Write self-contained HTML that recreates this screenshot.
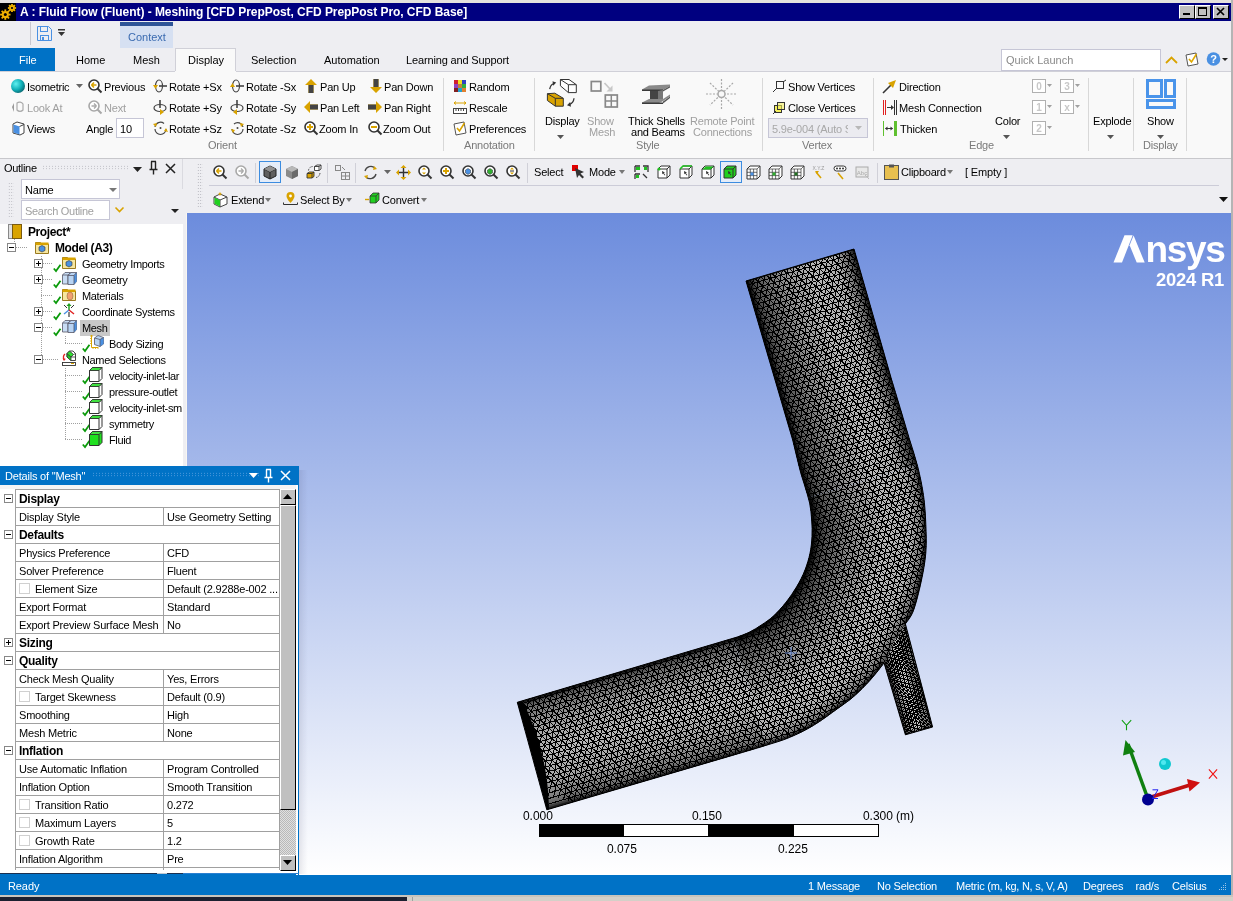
<!DOCTYPE html>
<html><head><meta charset="utf-8"><style>
html,body{margin:0;padding:0;}
body{width:1233px;height:901px;position:relative;overflow:hidden;background:#EEEEF2;font-family:"Liberation Sans",sans-serif;color:#000;}
.t{position:absolute;white-space:nowrap;}
.r{position:absolute;}
svg.r{overflow:visible;}
</style></head><body><div style="position:absolute;left:0;top:0;width:1233px;height:901px;overflow:hidden;will-change:transform;">
<div class="r" style="left:0px;top:0px;width:1233px;height:3px;background:#E4E2DE;"></div>
<div class="r" style="left:0px;top:3px;width:1231px;height:18px;background:#000080;"></div>
<div class="r" style="left:1231px;top:0px;width:2px;height:901px;background:#B4B4B4;"></div>
<svg class="r" style="left:0px;top:3px;" width="16" height="18" viewBox="0 0 16 18"><rect width="16" height="18" fill="#000"/><circle cx="5.3" cy="11.6" r="3.6" fill="#F0B000"/><path d="M8.40,11.60L10.50,11.60" stroke="#F0B000" stroke-width="1.8"/><path d="M7.49,13.79L8.98,15.28" stroke="#F0B000" stroke-width="1.8"/><path d="M5.30,14.70L5.30,16.80" stroke="#F0B000" stroke-width="1.8"/><path d="M3.11,13.79L1.62,15.28" stroke="#F0B000" stroke-width="1.8"/><path d="M2.20,11.60L0.10,11.60" stroke="#F0B000" stroke-width="1.8"/><path d="M3.11,9.41L1.62,7.92" stroke="#F0B000" stroke-width="1.8"/><path d="M5.30,8.50L5.30,6.40" stroke="#F0B000" stroke-width="1.8"/><path d="M7.49,9.41L8.98,7.92" stroke="#F0B000" stroke-width="1.8"/><circle cx="5.3" cy="11.6" r="1.5" fill="#000"/><circle cx="12" cy="5" r="2.9" fill="#F0B000"/><path d="M14.40,5.00L16.10,5.00" stroke="#F0B000" stroke-width="1.8"/><path d="M13.70,6.70L14.90,7.90" stroke="#F0B000" stroke-width="1.8"/><path d="M12.00,7.40L12.00,9.10" stroke="#F0B000" stroke-width="1.8"/><path d="M10.30,6.70L9.10,7.90" stroke="#F0B000" stroke-width="1.8"/><path d="M9.60,5.00L7.90,5.00" stroke="#F0B000" stroke-width="1.8"/><path d="M10.30,3.30L9.10,2.10" stroke="#F0B000" stroke-width="1.8"/><path d="M12.00,2.60L12.00,0.90" stroke="#F0B000" stroke-width="1.8"/><path d="M13.70,3.30L14.90,2.10" stroke="#F0B000" stroke-width="1.8"/><circle cx="12" cy="5" r="1.1" fill="#000"/></svg>
<div class="t" style="left:20px;top:4.8px;font-size:12px;line-height:14px;font-weight:700;color:#fff;letter-spacing:-0.05px;">A : Fluid Flow (Fluent) - Meshing [CFD PrepPost, CFD PrepPost Pro, CFD Base]</div>
<div class="r" style="left:1179px;top:5px;width:14px;height:12px;background:#C0C0C0;border-left:1px solid #fff;border-top:1px solid #fff;border-right:1px solid #000;border-bottom:1px solid #000;"></div>
<div class="r" style="left:1195px;top:5px;width:14px;height:12px;background:#C0C0C0;border-left:1px solid #fff;border-top:1px solid #fff;border-right:1px solid #000;border-bottom:1px solid #000;"></div>
<div class="r" style="left:1213px;top:5px;width:14px;height:12px;background:#C0C0C0;border-left:1px solid #fff;border-top:1px solid #fff;border-right:1px solid #000;border-bottom:1px solid #000;"></div>
<svg class="r" style="left:1179px;top:5px;" width="16" height="14" viewBox="0 0 16 14"><rect x="4" y="8" width="7" height="2" fill="#000"/></svg>
<svg class="r" style="left:1195px;top:5px;" width="16" height="14" viewBox="0 0 16 14"><rect x="3.5" y="2.5" width="8" height="8" fill="none" stroke="#000" stroke-width="1"/><rect x="3" y="2" width="9" height="2" fill="#000"/></svg>
<svg class="r" style="left:1213px;top:5px;" width="16" height="14" viewBox="0 0 16 14"><path d="M4 3l7 7M11 3l-7 7" stroke="#000" stroke-width="1.7"/></svg>
<div class="r" style="left:30px;top:22px;width:1px;height:23px;background:#C8C8D0;"></div>
<svg class="r" style="left:37px;top:26px;" width="15" height="15" viewBox="0 0 15 15"><path d="M0.5 0.5h11l3 3v11h-14z" fill="none" stroke="#4A90E2" stroke-width="1"/><rect x="3.5" y="0.5" width="7" height="5" fill="none" stroke="#4A90E2"/><rect x="3.5" y="9.5" width="8" height="5" fill="none" stroke="#4A90E2"/><rect x="5" y="11" width="2" height="3" fill="#4A90E2"/></svg>
<svg class="r" style="left:57px;top:28px;" width="9" height="8" viewBox="0 0 9 8"><rect x="1" y="1" width="7" height="1.5" fill="#333"/><path d="M1 4h7l-3.5 4z" fill="#333"/></svg>
<div class="r" style="left:120px;top:22px;width:53px;height:4px;background:#2F5597;"></div>
<div class="r" style="left:120px;top:26px;width:53px;height:22px;background:#D6E0F2;"></div>
<div class="t" style="left:128px;top:29.7px;font-size:11px;line-height:14px;color:#3A6AB0;">Context</div>
<div class="r" style="left:1001px;top:49px;width:158px;height:20px;background:#fff;border:1px solid #C6C6D6;"></div>
<div class="t" style="left:1006px;top:53.2px;font-size:11px;line-height:14px;color:#8A8A8A;">Quick Launch</div>
<svg class="r" style="left:1165px;top:56px;" width="13" height="8" viewBox="0 0 13 8"><path d="M1 7l5.5-5.5L12 7" fill="none" stroke="#D9A300" stroke-width="1.8"/></svg>
<svg class="r" style="left:1185px;top:52px;" width="15" height="15" viewBox="0 0 15 15"><path d="M1 3l10-2 2 11-10 2z" fill="#fff" stroke="#555" stroke-width="1"/><path d="M4 7l2.5 3 5-8" fill="none" stroke="#E0A800" stroke-width="1.6"/></svg>
<svg class="r" style="left:1206px;top:51px;" width="22" height="16" viewBox="0 0 22 16"><circle cx="7.5" cy="8" r="6.8" fill="#4A90E2"/><text x="7.5" y="12" font-family="Liberation Sans" font-weight="700" font-size="11" fill="#fff" text-anchor="middle">?</text><path d="M16 7h6l-3 3z" fill="#222"/></svg>
<div class="r" style="left:0px;top:48px;width:55px;height:23px;background:#0072C6;"></div>
<div class="t" style="left:19px;top:53.2px;font-size:11px;line-height:14px;color:#fff;">File</div>
<div class="t" style="left:76px;top:53.2px;font-size:11px;line-height:14px;">Home</div>
<div class="t" style="left:133px;top:53.2px;font-size:11px;line-height:14px;">Mesh</div>
<div class="r" style="left:175px;top:48px;width:61px;height:24px;background:#F9F9F9;border:1px solid #D0D0D8;border-bottom:none;box-sizing:border-box;"></div>
<div class="t" style="left:188px;top:53.2px;font-size:11px;line-height:14px;">Display</div>
<div class="t" style="left:251px;top:53.2px;font-size:11px;line-height:14px;">Selection</div>
<div class="t" style="left:324px;top:53.2px;font-size:11px;line-height:14px;">Automation</div>
<div class="t" style="left:406px;top:53.2px;font-size:11px;line-height:14px;letter-spacing:-0.15px;">Learning and Support</div>
<div class="r" style="left:0px;top:71px;width:1231px;height:88px;background:#F9F9F9;"></div>
<div class="r" style="left:0px;top:71px;width:175px;height:1px;background:#D0D0D8;"></div>
<div class="r" style="left:236px;top:71px;width:995px;height:1px;background:#D0D0D8;"></div>
<div class="r" style="left:0px;top:158px;width:1231px;height:1px;background:#C8C8CC;"></div>
<svg class="r" style="left:11px;top:79px;" width="15" height="15" viewBox="0 0 15 15"><defs><radialGradient id="sph" cx="0.35" cy="0.35" r="0.7"><stop offset="0" stop-color="#5FF0F0"/><stop offset="0.6" stop-color="#10B0B8"/><stop offset="1" stop-color="#0A6A74"/></radialGradient></defs><circle cx="7" cy="7" r="7" fill="url(#sph)"/></svg>
<div class="t" style="left:27px;top:80.2px;font-size:11px;line-height:14px;letter-spacing:-0.25px;">Isometric</div>
<svg class="r" style="left:76px;top:84px;" width="7" height="4" viewBox="0 0 7 4"><path d="M0 0h7l-3.5 4z" fill="#666"/></svg>
<svg class="r" style="left:88px;top:79px;" width="15" height="15" viewBox="0 0 15 15"><circle cx="6" cy="6" r="5" fill="#fff" stroke="#333" stroke-width="1.6"/><path d="M9.5 9.5l4 4" stroke="#333" stroke-width="2"/><path d="M3.5 6h5M3.5 6l2.5-2.5M3.5 6l2.5 2.5" stroke="#D9A300" stroke-width="1.6" fill="none"/></svg>
<div class="t" style="left:104px;top:80.2px;font-size:11px;line-height:14px;letter-spacing:-0.2px;">Previous</div>
<svg class="r" style="left:11px;top:100px;" width="15" height="15" viewBox="0 0 15 15"><path d="M1 7l2-4v9z" fill="#999"/><path d="M6 3a4 4 0 0 1 6 1v6a4 4 0 0 1-6 0z" fill="none" stroke="#aaa" stroke-width="1.2"/></svg>
<div class="t" style="left:27px;top:101.2px;font-size:11px;line-height:14px;color:#A0A0A0;letter-spacing:-0.2px;">Look At</div>
<svg class="r" style="left:88px;top:100px;" width="15" height="15" viewBox="0 0 15 15"><circle cx="6" cy="6" r="5" fill="#fff" stroke="#A8A8A8" stroke-width="1.6"/><path d="M9.5 9.5l4 4" stroke="#A8A8A8" stroke-width="2"/><path d="M8.5 6h-5M8.5 6l-2.5-2.5M8.5 6l-2.5 2.5" stroke="#AAA" stroke-width="1.4" fill="none"/></svg>
<div class="t" style="left:104px;top:101.2px;font-size:11px;line-height:14px;color:#A0A0A0;letter-spacing:-0.2px;">Next</div>
<svg class="r" style="left:12px;top:121px;" width="13" height="14" viewBox="0 0 13 14"><path d="M1 3l4-2 7 2v9l-4 2-7-2z" fill="#fff" stroke="#444" stroke-width="1"/><path d="M1.5 3.5l6 2v8l-6-2z" fill="#4A90E2"/><path d="M7.5 5.5l4.5-2" stroke="#444"/></svg>
<div class="t" style="left:27px;top:122.2px;font-size:11px;line-height:14px;letter-spacing:-0.2px;">Views</div>
<div class="t" style="left:86px;top:122.2px;font-size:11px;line-height:14px;letter-spacing:-0.2px;">Angle</div>
<div class="r" style="left:116px;top:118px;width:28px;height:20px;background:#fff;border:1px solid #C6C6D6;box-sizing:border-box;"></div>
<div class="t" style="left:120px;top:122.2px;font-size:11px;line-height:14px;">10</div>
<svg class="r" style="left:153px;top:79px;" width="15" height="15" viewBox="0 0 15 15"><ellipse cx="6" cy="7" rx="3.5" ry="6" fill="none" stroke="#444" stroke-width="1.2"/><path d="M6 7h8" stroke="#444" stroke-width="1.6"/><path d="M0 6h5l-2.5 4z" fill="#D9A300"/></svg>
<div class="t" style="left:169px;top:80.2px;font-size:11px;line-height:14px;letter-spacing:-0.2px;">Rotate +Sx</div>
<svg class="r" style="left:230px;top:79px;" width="15" height="15" viewBox="0 0 15 15"><ellipse cx="6" cy="7" rx="3.5" ry="6" fill="none" stroke="#444" stroke-width="1.2"/><path d="M6 7h8" stroke="#444" stroke-width="1.6"/><path d="M0 8h5l-2.5-4z" fill="#D9A300"/></svg>
<div class="t" style="left:246px;top:80.2px;font-size:11px;line-height:14px;letter-spacing:-0.2px;">Rotate -Sx</div>
<svg class="r" style="left:153px;top:100px;" width="15" height="15" viewBox="0 0 15 15"><ellipse cx="7" cy="8" rx="6" ry="3.5" fill="none" stroke="#444" stroke-width="1.2"/><path d="M7 0v8" stroke="#444" stroke-width="1.6"/><path d="M7 9v6l4-3z" fill="#D9A300"/></svg>
<div class="t" style="left:169px;top:101.2px;font-size:11px;line-height:14px;letter-spacing:-0.2px;">Rotate +Sy</div>
<svg class="r" style="left:230px;top:100px;" width="15" height="15" viewBox="0 0 15 15"><ellipse cx="7" cy="8" rx="6" ry="3.5" fill="none" stroke="#444" stroke-width="1.2"/><path d="M7 0v8" stroke="#444" stroke-width="1.6"/><path d="M7 9v6l-4-3z" fill="#D9A300"/></svg>
<div class="t" style="left:246px;top:101.2px;font-size:11px;line-height:14px;letter-spacing:-0.2px;">Rotate -Sy</div>
<svg class="r" style="left:153px;top:121px;" width="15" height="15" viewBox="0 0 15 15"><path d="M2 8a5.5 5.5 0 0 0 11 0M2 6a5.5 5.5 0 0 1 9-3.5" fill="none" stroke="#444" stroke-width="1.2"/><circle cx="7.5" cy="7" r="1" fill="#444"/><path d="M0 3l3 3 1-4z" fill="#D9A300"/><path d="M13 7l2 4-4-1z" fill="#D9A300"/></svg>
<div class="t" style="left:169px;top:122.2px;font-size:11px;line-height:14px;letter-spacing:-0.2px;">Rotate +Sz</div>
<svg class="r" style="left:230px;top:121px;" width="15" height="15" viewBox="0 0 15 15"><path d="M2 8a5.5 5.5 0 0 0 11 0M4 3a5.5 5.5 0 0 1 9 3" fill="none" stroke="#444" stroke-width="1.2"/><circle cx="7.5" cy="7" r="1" fill="#444"/><path d="M14 3l-3 3-1-4z" fill="#D9A300"/><path d="M1 8l2 4 2-3z" fill="#D9A300"/></svg>
<div class="t" style="left:246px;top:122.2px;font-size:11px;line-height:14px;letter-spacing:-0.2px;">Rotate -Sz</div>
<svg class="r" style="left:305px;top:79px;" width="12" height="14" viewBox="0 0 12 14"><path d="M6 0l6 6H8.5v8h-5V6H0z" fill="#D9A300"/><rect x="3.5" y="6" width="5" height="8" fill="#444"/></svg>
<div class="t" style="left:320px;top:80.2px;font-size:11px;line-height:14px;letter-spacing:-0.2px;">Pan Up</div>
<svg class="r" style="left:370px;top:79px;" width="12" height="14" viewBox="0 0 12 14"><path d="M6 14l6-6H8.5V0h-5v8H0z" fill="#D9A300"/><rect x="3.5" y="0" width="5" height="8" fill="#444"/></svg>
<div class="t" style="left:384px;top:80.2px;font-size:11px;line-height:14px;letter-spacing:-0.2px;">Pan Down</div>
<svg class="r" style="left:304px;top:101px;" width="14" height="12" viewBox="0 0 14 12"><path d="M0 6l6-6v3.5h8v5H6V12z" fill="#D9A300"/><rect x="6" y="3.5" width="8" height="5" fill="#444"/></svg>
<div class="t" style="left:320px;top:101.2px;font-size:11px;line-height:14px;letter-spacing:-0.2px;">Pan Left</div>
<svg class="r" style="left:368px;top:101px;" width="14" height="12" viewBox="0 0 14 12"><path d="M14 6L8 0v3.5H0v5h8V12z" fill="#D9A300"/><rect x="0" y="3.5" width="8" height="5" fill="#444"/></svg>
<div class="t" style="left:384px;top:101.2px;font-size:11px;line-height:14px;letter-spacing:-0.2px;">Pan Right</div>
<svg class="r" style="left:304px;top:121px;" width="15" height="15" viewBox="0 0 15 15"><circle cx="6" cy="6" r="5" fill="#fff" stroke="#333" stroke-width="1.6"/><path d="M9.5 9.5l4 4" stroke="#333" stroke-width="2"/><path d="M3 6h6M6 3v6" stroke="#D9A300" stroke-width="2"/></svg>
<div class="t" style="left:319px;top:122.2px;font-size:11px;line-height:14px;letter-spacing:-0.2px;">Zoom In</div>
<svg class="r" style="left:368px;top:121px;" width="15" height="15" viewBox="0 0 15 15"><circle cx="6" cy="6" r="5" fill="#fff" stroke="#333" stroke-width="1.6"/><path d="M9.5 9.5l4 4" stroke="#333" stroke-width="2"/><path d="M3 6h6" stroke="#D9A300" stroke-width="2"/></svg>
<div class="t" style="left:383px;top:122.2px;font-size:11px;line-height:14px;letter-spacing:-0.2px;">Zoom Out</div>
<div class="t" style="left:208px;top:138.2px;font-size:11px;line-height:14px;color:#7A7A7A;letter-spacing:-0.2px;">Orient</div>
<div class="r" style="left:443px;top:78px;width:1px;height:73px;background:#D8D8D8;"></div>
<svg class="r" style="left:454px;top:80px;" width="12" height="12" viewBox="0 0 12 12"><rect x="0" y="0" width="4" height="4" fill="#D02030"/><rect x="4" y="0" width="4" height="4" fill="#F0E020"/><rect x="8" y="0" width="4" height="4" fill="#3040C0"/><rect x="0" y="4" width="4" height="4" fill="#9040C0"/><rect x="4" y="4" width="4" height="4" fill="#C08040"/><rect x="8" y="4" width="4" height="4" fill="#30B040"/><rect x="0" y="8" width="4" height="4" fill="#802020"/><rect x="4" y="8" width="4" height="4" fill="#20A0D0"/><rect x="8" y="8" width="4" height="4" fill="#E08030"/></svg>
<div class="t" style="left:469px;top:80.2px;font-size:11px;line-height:14px;letter-spacing:-0.2px;">Random</div>
<svg class="r" style="left:453px;top:101px;" width="14" height="13" viewBox="0 0 14 13"><path d="M1 2h12M1 2l2-1.5M1 2l2 1.5M13 2l-2-1.5M13 2l-2 1.5" stroke="#D9A300" stroke-width="1" fill="none"/><rect x="0.5" y="7.5" width="13" height="5" fill="#fff" stroke="#444"/><path d="M3 8v2M5.5 8v2M8 8v2M10.5 8v2" stroke="#444"/></svg>
<div class="t" style="left:469px;top:101.2px;font-size:11px;line-height:14px;letter-spacing:-0.2px;">Rescale</div>
<svg class="r" style="left:453px;top:121px;" width="14" height="14" viewBox="0 0 14 14"><path d="M1 3l10-2 2 11-10 2z" fill="#fff" stroke="#555"/><path d="M4 7l2.5 3 5-8" fill="none" stroke="#D9A300" stroke-width="1.6"/></svg>
<div class="t" style="left:469px;top:122.2px;font-size:11px;line-height:14px;letter-spacing:-0.2px;">Preferences</div>
<div class="t" style="left:464px;top:138.2px;font-size:11px;line-height:14px;color:#7A7A7A;letter-spacing:-0.2px;">Annotation</div>
<div class="r" style="left:534px;top:78px;width:1px;height:73px;background:#D8D8D8;"></div>
<svg class="r" style="left:540px;top:75px;" width="40" height="36" viewBox="0 0 40 36"><path d="M20.4,4.5 L29,4.5 L36.3,9.7 V17.6 H28.4 L20.4,10.8 Z" fill="#fff" stroke="#333" stroke-width="1"/><path d="M20.4,4.5 L28.4,9.7 H36.3 M28.4,9.7 V17.6" fill="none" stroke="#333" stroke-width="1"/><path d="M7.4,18.7 L14.8,18.2 L23.3,23.3 V31.2 H15.3 L7.4,25.5 Z" fill="#D9A300" stroke="#333" stroke-width="1"/><path d="M7.4,18.7 L15.3,23.3 H23.3 M15.3,23.3 V31.2" fill="none" stroke="#333" stroke-width="1"/><path d="M9.7,14.2 Q10.5,9.5 14,8.5" fill="none" stroke="#333" stroke-width="1.3"/><path d="M12.5,6.3 L16.2,7.6 L13.2,10.8 Z" fill="#333"/><path d="M34,23.3 Q33.5,28 29.5,29.5" fill="none" stroke="#333" stroke-width="1.3"/><path d="M31,31.8 L27,30.3 L30.2,27 Z" fill="#333"/></svg>
<div class="t" style="left:545px;top:114.2px;font-size:11px;line-height:14px;letter-spacing:-0.2px;">Display</div>
<svg class="r" style="left:557px;top:135px;" width="7" height="4" viewBox="0 0 7 4"><path d="M0 0h7l-3.5 4z" fill="#555"/></svg>
<svg class="r" style="left:589px;top:79px;" width="31" height="31" viewBox="0 0 31 31"><rect x="2.3" y="2.5" width="9.5" height="9.5" fill="none" stroke="#888" stroke-width="1.7"/><path d="M15.5,4 L22,11" stroke="#C8C8C8" stroke-width="1.8"/><path d="M23.5,12.5 L23.5,6.5 L17.5,12.5 Z" fill="#C8C8C8"/><rect x="16.3" y="16" width="12" height="12" fill="none" stroke="#888" stroke-width="1.7"/><path d="M22.3,16 V28 M16.3,22 H28.3" stroke="#888" stroke-width="1.5"/></svg>
<div class="t" style="left:587px;top:114.2px;font-size:11px;line-height:14px;color:#A0A0A0;letter-spacing:-0.2px;">Show</div>
<div class="t" style="left:589px;top:125.2px;font-size:11px;line-height:14px;color:#A0A0A0;letter-spacing:-0.2px;">Mesh</div>
<svg class="r" style="left:640px;top:82px;" width="32" height="28" viewBox="0 0 32 28"><path d="M2,7.5 L9,3.5 L30,2.5 V4 L23,8 L2,8.5 Z" fill="#8A8A8A"/><path d="M2,7.5 H23 V9 H2 Z" fill="#3A3A3A"/><path d="M23,8 L30,4 V5.5 L23,9.5 Z" fill="#555"/><path d="M10,9 H18 V20 H10 Z" fill="#444"/><path d="M18,9 L23,8 V19 L18,20 Z" fill="#777"/><path d="M2,20.5 L9,17 H23 L30,12.5 V14.5 L23,19 L18,21.5 H2 Z" fill="#8A8A8A"/><path d="M2,20.5 H23 V22 H2 Z" fill="#3A3A3A"/><path d="M23,19.5 L30,14.5 V16 L23,21.5 Z" fill="#555"/></svg>
<div class="t" style="left:628px;top:114.2px;font-size:11px;line-height:14px;letter-spacing:-0.2px;">Thick Shells</div>
<div class="t" style="left:631px;top:125.2px;font-size:11px;line-height:14px;letter-spacing:-0.2px;">and Beams</div>
<svg class="r" style="left:706px;top:79px;" width="31" height="30" viewBox="0 0 31 30"><g stroke="#A8A8A8" stroke-width="1.2" stroke-dasharray="2 1.5"><path d="M15.5 0v30M0 15h31M4 4l23 22M27 4L4 26"/></g><circle cx="15.5" cy="15" r="3.5" fill="#F9F9F9" stroke="#A8A8A8" stroke-width="1.5"/></svg>
<div class="t" style="left:690px;top:114.2px;font-size:11px;line-height:14px;color:#A0A0A0;letter-spacing:-0.2px;">Remote Point</div>
<div class="t" style="left:693px;top:125.2px;font-size:11px;line-height:14px;color:#A0A0A0;letter-spacing:-0.2px;">Connections</div>
<div class="t" style="left:636px;top:138.2px;font-size:11px;line-height:14px;color:#7A7A7A;letter-spacing:-0.2px;">Style</div>
<div class="r" style="left:762px;top:78px;width:1px;height:73px;background:#D8D8D8;"></div>
<svg class="r" style="left:773px;top:80px;" width="13" height="12" viewBox="0 0 13 12"><rect x="3.5" y="1.5" width="7" height="7" fill="none" stroke="#333"/><path d="M0 12l4-4M10 2l3-2" stroke="#333"/></svg>
<div class="t" style="left:788px;top:80.2px;font-size:11px;line-height:14px;letter-spacing:-0.2px;">Show Vertices</div>
<svg class="r" style="left:773px;top:101px;" width="13" height="13" viewBox="0 0 13 13"><rect x="1.5" y="4.5" width="7" height="7" fill="#F4F060" stroke="#333"/><rect x="4.5" y="1.5" width="7" height="7" fill="#F4F060" fill-opacity="0.6" stroke="#333"/><path d="M0 13l3-3" stroke="#333"/></svg>
<div class="t" style="left:788px;top:101.2px;font-size:11px;line-height:14px;letter-spacing:-0.2px;">Close Vertices</div>
<div class="r" style="left:768px;top:118px;width:100px;height:20px;background:#EBEBF0;border:1px solid #C6C6D6;box-sizing:border-box;"></div>
<div class="t" style="left:772px;top:122.2px;font-size:11px;line-height:14px;color:#A8A8A8;letter-spacing:-0.2px;">5.9e-004 (Auto S</div>
<div class="r" style="left:849px;top:120px;width:1px;height:0px;"></div>
<svg class="r" style="left:857px;top:126px;" width="7" height="4" viewBox="0 0 7 4"><path d="M0 0h7l-3.5 4z" fill="#B0B0B0"/></svg>
<div class="r" style="left:848px;top:119px;width:18px;height:18px;background:#EBEBF0;"></div>
<svg class="r" style="left:855px;top:126px;" width="7" height="4" viewBox="0 0 7 4"><path d="M0 0h7l-3.5 4z" fill="#B8B8B8"/></svg>
<div class="t" style="left:802px;top:138.2px;font-size:11px;line-height:14px;color:#7A7A7A;letter-spacing:-0.2px;">Vertex</div>
<div class="r" style="left:873px;top:78px;width:1px;height:73px;background:#D8D8D8;"></div>
<svg class="r" style="left:882px;top:79px;" width="15" height="15" viewBox="0 0 15 15"><path d="M1 14L9 6" stroke="#333" stroke-width="1.6"/><path d="M14 1L6 4l5 5z" fill="#D9A300"/></svg>
<div class="t" style="left:899px;top:80.2px;font-size:11px;line-height:14px;letter-spacing:-0.2px;">Direction</div>
<svg class="r" style="left:882px;top:100px;" width="16" height="15" viewBox="0 0 16 15"><path d="M1.5 0v15M3.5 0v15" stroke="#E02020" stroke-width="1"/><path d="M5 7.5h5" stroke="#333"/><path d="M9 5l3 2.5-3 2.5z" fill="#333"/><path d="M12.5 0v15M14.5 0v15" stroke="#333" stroke-width="1"/></svg>
<div class="t" style="left:899px;top:101.2px;font-size:11px;line-height:14px;letter-spacing:-0.2px;">Mesh Connection</div>
<svg class="r" style="left:882px;top:121px;" width="16" height="15" viewBox="0 0 16 15"><path d="M1.5 0v15" stroke="#60C030" stroke-width="1"/><rect x="12" y="0" width="3" height="15" fill="#60C030"/><path d="M3.5 7.5h7" stroke="#333" fill="none"/><path d="M3 7.5l2.5-2v4zM11 7.5l-2.5-2v4z" fill="#333"/></svg>
<div class="t" style="left:900px;top:122.2px;font-size:11px;line-height:14px;letter-spacing:-0.2px;">Thicken</div>
<div class="t" style="left:995px;top:114.2px;font-size:11px;line-height:14px;letter-spacing:-0.2px;">Color</div>
<svg class="r" style="left:1003px;top:135px;" width="7" height="4" viewBox="0 0 7 4"><path d="M0 0h7l-3.5 4z" fill="#555"/></svg>
<svg class="r" style="left:1032px;top:79px;" width="21" height="15" viewBox="0 0 21 15"><rect x="0.5" y="0.5" width="13" height="13" fill="#fff" stroke="#B0B0B0"/><text x="7" y="11" font-family="Liberation Sans" font-size="10" font-weight="700" fill="#C8C8C8" text-anchor="middle">0</text><path d="M15 5h5l-2.5 3z" fill="#A0A0A0"/></svg>
<svg class="r" style="left:1060px;top:79px;" width="21" height="15" viewBox="0 0 21 15"><rect x="0.5" y="0.5" width="13" height="13" fill="#fff" stroke="#B0B0B0"/><text x="7" y="11" font-family="Liberation Sans" font-size="10" font-weight="700" fill="#C8C8C8" text-anchor="middle">3</text><path d="M15 5h5l-2.5 3z" fill="#A0A0A0"/></svg>
<svg class="r" style="left:1032px;top:100px;" width="21" height="15" viewBox="0 0 21 15"><rect x="0.5" y="0.5" width="13" height="13" fill="#fff" stroke="#B0B0B0"/><text x="7" y="11" font-family="Liberation Sans" font-size="10" font-weight="700" fill="#C8C8C8" text-anchor="middle">1</text><path d="M15 5h5l-2.5 3z" fill="#A0A0A0"/></svg>
<svg class="r" style="left:1060px;top:100px;" width="21" height="15" viewBox="0 0 21 15"><rect x="0.5" y="0.5" width="13" height="13" fill="#fff" stroke="#B0B0B0"/><text x="7" y="11" font-family="Liberation Sans" font-size="10" font-weight="700" fill="#C8C8C8" text-anchor="middle">x</text><path d="M15 5h5l-2.5 3z" fill="#A0A0A0"/></svg>
<svg class="r" style="left:1032px;top:121px;" width="21" height="15" viewBox="0 0 21 15"><rect x="0.5" y="0.5" width="13" height="13" fill="#fff" stroke="#B0B0B0"/><text x="7" y="11" font-family="Liberation Sans" font-size="10" font-weight="700" fill="#C8C8C8" text-anchor="middle">2</text><path d="M15 5h5l-2.5 3z" fill="#A0A0A0"/></svg>
<div class="t" style="left:969px;top:138.2px;font-size:11px;line-height:14px;color:#7A7A7A;letter-spacing:-0.2px;">Edge</div>
<div class="r" style="left:1088px;top:78px;width:1px;height:73px;background:#D8D8D8;"></div>
<div class="t" style="left:1093px;top:114.2px;font-size:11px;line-height:14px;letter-spacing:-0.2px;">Explode</div>
<svg class="r" style="left:1107px;top:135px;" width="7" height="4" viewBox="0 0 7 4"><path d="M0 0h7l-3.5 4z" fill="#555"/></svg>
<div class="r" style="left:1133px;top:78px;width:1px;height:73px;background:#D8D8D8;"></div>
<svg class="r" style="left:1146px;top:79px;" width="31" height="31" viewBox="0 0 31 31"><rect x="1.5" y="1.5" width="14" height="16" fill="none" stroke="#4A94EA" stroke-width="3"/><rect x="19.5" y="1.5" width="9" height="16" fill="none" stroke="#4A94EA" stroke-width="3"/><rect x="1.5" y="21.5" width="27" height="7" fill="none" stroke="#4A94EA" stroke-width="3"/></svg>
<div class="t" style="left:1147px;top:114.2px;font-size:11px;line-height:14px;letter-spacing:-0.2px;">Show</div>
<svg class="r" style="left:1157px;top:135px;" width="7" height="4" viewBox="0 0 7 4"><path d="M0 0h7l-3.5 4z" fill="#555"/></svg>
<div class="t" style="left:1143px;top:138.2px;font-size:11px;line-height:14px;color:#7A7A7A;letter-spacing:-0.2px;">Display</div>
<div class="r" style="left:1186px;top:78px;width:1px;height:73px;background:#D8D8D8;"></div>
<div class="t" style="left:4px;top:161.2px;font-size:11px;line-height:14px;letter-spacing:-0.3px;">Outline</div>
<div class="r" style="left:42px;top:165px;width:86px;height:5px;background-image:radial-gradient(circle,#B8B8C0 0.7px,transparent 0.8px);background-size:3px 2.5px;"></div>
<svg class="r" style="left:133px;top:167px;" width="9" height="5" viewBox="0 0 9 5"><path d="M0 0h9l-4.5 5z" fill="#222"/></svg>
<svg class="r" style="left:149px;top:161px;" width="9" height="14" viewBox="0 0 9 14"><path d="M2 0.5h5M2.5 0.5v8M6.5 0.5v8M0.5 8.5h8M4.5 8.5v5" stroke="#222" stroke-width="1.4" fill="none"/></svg>
<svg class="r" style="left:165px;top:163px;" width="11" height="11" viewBox="0 0 11 11"><path d="M1 1l9 9M10 1l-9 9" stroke="#222" stroke-width="1.5"/></svg>
<div class="r" style="left:182px;top:159px;width:1px;height:30px;background:#DADAE0;"></div>
<div class="r" style="left:8px;top:182px;width:6px;height:37px;background-image:radial-gradient(circle,#B8B8C0 0.7px,transparent 0.8px);background-size:2.5px 3px;"></div>
<div class="r" style="left:21px;top:179px;width:99px;height:20px;background:#fff;border:1px solid #C6C6D6;box-sizing:border-box;"></div>
<div class="t" style="left:25px;top:183.2px;font-size:11px;line-height:14px;letter-spacing:-0.2px;">Name</div>
<svg class="r" style="left:109px;top:188px;" width="8" height="4" viewBox="0 0 8 4"><path d="M0 0h8l-4 4z" fill="#777"/></svg>
<div class="r" style="left:21px;top:200px;width:89px;height:20px;background:#fff;border:1px solid #C6C6D6;box-sizing:border-box;"></div>
<div class="t" style="left:25px;top:204.2px;font-size:11px;line-height:14px;color:#A0A0A0;letter-spacing:-0.3px;">Search Outline</div>
<svg class="r" style="left:115px;top:207px;" width="9" height="6" viewBox="0 0 9 6"><path d="M0.5 0.5l4 4 4-4" stroke="#D9A300" stroke-width="1.6" fill="none"/></svg>
<svg class="r" style="left:171px;top:209px;" width="8" height="4" viewBox="0 0 8 4"><path d="M0 0h8l-4 4z" fill="#222"/></svg>
<div class="r" style="left:0px;top:224px;width:183px;height:242px;background:#fff;"></div>
<svg class="r" style="left:8px;top:224px;" width="14" height="15" viewBox="0 0 14 15"><rect x="0.5" y="0.5" width="4" height="14" fill="#E0E0E0" stroke="#888"/><rect x="4.5" y="0.5" width="9" height="14" fill="#D9A300" stroke="#7A5A10"/></svg>
<div class="t" style="left:28px;top:224.5px;font-size:12px;line-height:14px;font-weight:700;letter-spacing:-0.4px;">Project*</div>
<div class="r" style="left:14px;top:239px;width:1px;height:9px;background-image:linear-gradient(#A0A0A0 50%,transparent 50%);background-size:1px 2px;"></div>
<svg class="r" style="left:7px;top:243px;" width="9" height="9" viewBox="0 0 9 9"><rect x="0.5" y="0.5" width="8" height="8" fill="#fff" stroke="#888"/><path d="M2 4.5h5" stroke="#000"/></svg>
<div class="r" style="left:16px;top:247px;width:12px;height:1px;background-image:linear-gradient(90deg,#A0A0A0 50%,transparent 50%);background-size:2px 1px;"></div>
<svg class="r" style="left:35px;top:240px;" width="14" height="14" viewBox="0 0 14 14"><path d="M0.5 2.5h5l1 1.5h7v9.5h-13z" fill="#F6E6A0" stroke="#9A7A20"/><rect x="0.5" y="2.5" width="13" height="2.5" fill="#D9A300"/><path d="M4 7l3-1.5 3 1.5v3.5l-3 1.5-3-1.5z" fill="#4A90E2" stroke="#333" stroke-width="0.6"/></svg>
<div class="t" style="left:55px;top:240.5px;font-size:12px;line-height:14px;font-weight:700;letter-spacing:-0.4px;">Model (A3)</div>
<div class="r" style="left:41px;top:256px;width:1px;height:104px;background-image:linear-gradient(#A0A0A0 50%,transparent 50%);background-size:1px 2px;"></div>
<svg class="r" style="left:34px;top:259px;" width="9" height="9" viewBox="0 0 9 9"><rect x="0.5" y="0.5" width="8" height="8" fill="#fff" stroke="#888"/><path d="M2 4.5h5" stroke="#000"/><path d="M4.5 2v5" stroke="#000"/></svg>
<div class="r" style="left:43px;top:263px;width:10px;height:1px;background-image:linear-gradient(90deg,#A0A0A0 50%,transparent 50%);background-size:2px 1px;"></div>
<svg class="r" style="left:53px;top:264px;" width="8" height="8" viewBox="0 0 8 8"><path d="M0.8 4.5l2.2 2.5L7.5 0.8" stroke="#0A9A0A" stroke-width="1.8" fill="none"/></svg>
<svg class="r" style="left:62px;top:255px;" width="14" height="14" viewBox="0 0 14 14"><path d="M0.5 2.5h5l1 1.5h7v9.5h-13z" fill="#F6E6A0" stroke="#9A7A20"/><rect x="0.5" y="2.5" width="13" height="2.5" fill="#D9A300"/><path d="M4 7l3-1.5 3 1.5v3.5l-3 1.5-3-1.5z" fill="#4A90E2" stroke="#333" stroke-width="0.6"/></svg>
<div class="t" style="left:82px;top:257.2px;font-size:11px;line-height:14px;letter-spacing:-0.35px;">Geometry Imports</div>
<svg class="r" style="left:34px;top:275px;" width="9" height="9" viewBox="0 0 9 9"><rect x="0.5" y="0.5" width="8" height="8" fill="#fff" stroke="#888"/><path d="M2 4.5h5" stroke="#000"/><path d="M4.5 2v5" stroke="#000"/></svg>
<div class="r" style="left:43px;top:279px;width:10px;height:1px;background-image:linear-gradient(90deg,#A0A0A0 50%,transparent 50%);background-size:2px 1px;"></div>
<svg class="r" style="left:53px;top:280px;" width="8" height="8" viewBox="0 0 8 8"><path d="M0.8 4.5l2.2 2.5L7.5 0.8" stroke="#0A9A0A" stroke-width="1.8" fill="none"/></svg>
<svg class="r" style="left:62px;top:271px;" width="15" height="15" viewBox="0 0 15 15"><path d="M0.5,4 L3,1.5 H8.5 V10.5 L6,13 H0.5 Z" fill="#C8DCF4" stroke="#556" stroke-width="0.8"/><path d="M0.5,4 H6 V13 M6,4 L8.5,1.5" fill="none" stroke="#556" stroke-width="0.8"/><path d="M6,4.5 L9,1.5 H14.5 V10.5 L12,13.5 H6 Z" fill="#B8D4F4" stroke="#556" stroke-width="0.8"/><path d="M12,4.5 L14.5,1.5 V10.5 L12,13.5 Z" fill="#4A90E2"/><path d="M6,4.5 H12 V13.5 M12,4.5 L14.5,1.5" fill="none" stroke="#556" stroke-width="0.8"/></svg>
<div class="t" style="left:82px;top:273.2px;font-size:11px;line-height:14px;letter-spacing:-0.35px;">Geometry</div>
<div class="r" style="left:41px;top:295px;width:12px;height:1px;background-image:linear-gradient(90deg,#A0A0A0 50%,transparent 50%);background-size:2px 1px;"></div>
<svg class="r" style="left:53px;top:296px;" width="8" height="8" viewBox="0 0 8 8"><path d="M0.8 4.5l2.2 2.5L7.5 0.8" stroke="#0A9A0A" stroke-width="1.8" fill="none"/></svg>
<svg class="r" style="left:62px;top:287px;" width="14" height="14" viewBox="0 0 14 14"><path d="M0.5 2.5h5l1 1.5h7v9.5h-13z" fill="#F6E6A0" stroke="#9A7A20"/><rect x="0.5" y="2.5" width="13" height="2.5" fill="#D9A300"/><ellipse cx="8" cy="9" rx="3" ry="4" fill="#F0A070" stroke="#9A6A40" stroke-width="0.6"/></svg>
<div class="t" style="left:82px;top:289.2px;font-size:11px;line-height:14px;letter-spacing:-0.35px;">Materials</div>
<svg class="r" style="left:34px;top:307px;" width="9" height="9" viewBox="0 0 9 9"><rect x="0.5" y="0.5" width="8" height="8" fill="#fff" stroke="#888"/><path d="M2 4.5h5" stroke="#000"/><path d="M4.5 2v5" stroke="#000"/></svg>
<div class="r" style="left:43px;top:311px;width:10px;height:1px;background-image:linear-gradient(90deg,#A0A0A0 50%,transparent 50%);background-size:2px 1px;"></div>
<svg class="r" style="left:53px;top:312px;" width="8" height="8" viewBox="0 0 8 8"><path d="M0.8 4.5l2.2 2.5L7.5 0.8" stroke="#0A9A0A" stroke-width="1.8" fill="none"/></svg>
<svg class="r" style="left:62px;top:303px;" width="14" height="15" viewBox="0 0 14 15"><path d="M7 7V1" stroke="#20A020" stroke-width="1.5"/><path d="M4.5 3L7 0l2.5 3z" fill="#20A020"/><path d="M7 7l-5 4" stroke="#4A90E2" stroke-width="1.5"/><path d="M7 7l5 4" stroke="#E02020" stroke-width="1.5"/><path d="M2 2l3 3M12 2l-3 3" stroke="#333"/><rect x="6" y="9" width="2" height="5" fill="#888"/></svg>
<div class="t" style="left:82px;top:305.2px;font-size:11px;line-height:14px;letter-spacing:-0.35px;">Coordinate Systems</div>
<svg class="r" style="left:34px;top:323px;" width="9" height="9" viewBox="0 0 9 9"><rect x="0.5" y="0.5" width="8" height="8" fill="#fff" stroke="#888"/><path d="M2 4.5h5" stroke="#000"/></svg>
<div class="r" style="left:43px;top:327px;width:10px;height:1px;background-image:linear-gradient(90deg,#A0A0A0 50%,transparent 50%);background-size:2px 1px;"></div>
<svg class="r" style="left:53px;top:328px;" width="8" height="8" viewBox="0 0 8 8"><path d="M0.8 4.5l2.2 2.5L7.5 0.8" stroke="#0A9A0A" stroke-width="1.8" fill="none"/></svg>
<svg class="r" style="left:62px;top:319px;" width="15" height="15" viewBox="0 0 15 15"><path d="M0.5,4 L3,1.5 H8.5 V10.5 L6,13 H0.5 Z" fill="#C8DCF4" stroke="#556" stroke-width="0.8"/><path d="M0.5,4 H6 V13 M6,4 L8.5,1.5" fill="none" stroke="#556" stroke-width="0.8"/><path d="M6,4.5 L9,1.5 H14.5 V10.5 L12,13.5 H6 Z" fill="#B8D4F4" stroke="#556" stroke-width="0.8"/><path d="M12,4.5 L14.5,1.5 V10.5 L12,13.5 Z" fill="#4A90E2"/><path d="M6,4.5 H12 V13.5 M12,4.5 L14.5,1.5" fill="none" stroke="#556" stroke-width="0.8"/></svg>
<div class="r" style="left:80px;top:320px;width:30px;height:16px;background:#C8C8C8;"></div>
<div class="t" style="left:82px;top:321.2px;font-size:11px;line-height:14px;letter-spacing:-0.35px;">Mesh</div>
<div class="r" style="left:65px;top:336px;width:1px;height:8px;background-image:linear-gradient(#A0A0A0 50%,transparent 50%);background-size:1px 2px;"></div>
<div class="r" style="left:65px;top:343px;width:17px;height:1px;background-image:linear-gradient(90deg,#A0A0A0 50%,transparent 50%);background-size:2px 1px;"></div>
<svg class="r" style="left:82px;top:344px;" width="8" height="8" viewBox="0 0 8 8"><path d="M0.8 4.5l2.2 2.5L7.5 0.8" stroke="#0A9A0A" stroke-width="1.8" fill="none"/></svg>
<svg class="r" style="left:89px;top:334px;" width="16" height="16" viewBox="0 0 16 16"><path d="M2.5,1 V13.5 H9" fill="none" stroke="#D9A300" stroke-width="1"/><path d="M1,2 H4 M1,4.5 H3 M1,7 H3 M1,9.5 H3 M4,15 V13 M6.5,15 V14 M9,15 V13" stroke="#D9A300" stroke-width="0.8"/><path d="M5.5,4 L9,1.5 L14.5,3.5 V10 L11,12.5 L5.5,10.5 Z" fill="#B8D4F4" stroke="#556" stroke-width="0.8"/><path d="M11,5.5 L14.5,3.5 V10 L11,12.5 Z" fill="#4A90E2"/><path d="M5.5,4 L11,5.5 L14.5,3.5 M11,5.5 V12.5" fill="none" stroke="#556" stroke-width="0.8"/></svg>
<div class="t" style="left:109px;top:337.2px;font-size:11px;line-height:14px;letter-spacing:-0.35px;">Body Sizing</div>
<svg class="r" style="left:34px;top:355px;" width="9" height="9" viewBox="0 0 9 9"><rect x="0.5" y="0.5" width="8" height="8" fill="#fff" stroke="#888"/><path d="M2 4.5h5" stroke="#000"/></svg>
<div class="r" style="left:43px;top:359px;width:15px;height:1px;background-image:linear-gradient(90deg,#A0A0A0 50%,transparent 50%);background-size:2px 1px;"></div>
<svg class="r" style="left:61px;top:350px;" width="16" height="16" viewBox="0 0 16 16"><rect x="1.5" y="12.5" width="13" height="3" fill="#fff" stroke="#333" stroke-width="0.9"/><path d="M10,13.5 H13" stroke="#D9A300"/><path d="M3,9.5 Q1.5,6 4,4" fill="none" stroke="#E02020" stroke-width="1.3"/><path d="M1.5,8.5 L3,11 L4.8,8.8 Z" fill="#E02020"/><path d="M6,3.5 L8.5,1 H12 L14.5,3.5 V10.5 H10 L6,7 Z" fill="#fff" stroke="#333" stroke-width="0.9"/><path d="M6,3.5 L10,7 V10.5 L6,7 Z" fill="#20D020" stroke="#333" stroke-width="0.8"/><path d="M6,3.5 L8.5,1 L12.5,4.5 L10,7 Z" fill="#30E030" stroke="#333" stroke-width="0.8"/><path d="M10,7 H14.5 M12.5,4.5 L14.5,3.5" stroke="#333" stroke-width="0.8" fill="none"/></svg>
<div class="t" style="left:82px;top:353.2px;font-size:11px;line-height:14px;letter-spacing:-0.35px;">Named Selections</div>
<div class="r" style="left:65px;top:368px;width:1px;height:72px;background-image:linear-gradient(#A0A0A0 50%,transparent 50%);background-size:1px 2px;"></div>
<div class="r" style="left:65px;top:375px;width:17px;height:1px;background-image:linear-gradient(90deg,#A0A0A0 50%,transparent 50%);background-size:2px 1px;"></div>
<svg class="r" style="left:82px;top:376px;" width="8" height="8" viewBox="0 0 8 8"><path d="M0.8 4.5l2.2 2.5L7.5 0.8" stroke="#0A9A0A" stroke-width="1.8" fill="none"/></svg>
<svg class="r" style="left:89px;top:367px;" width="14" height="15" viewBox="0 0 14 15"><path d="M0.5 3.5l3-3h9.5v11l-3 3H0.5z" fill="#fff" stroke="#333" stroke-width="1"/><path d="M0.5 3.5h9.5v11M10 3.5l3-3" stroke="#333" fill="none"/><path d="M0.5 3.5l3-3h9.5l-3 3z" fill="#40E040" stroke="#333" stroke-width="0.8"/></svg>
<div class="t" style="left:109px;top:369.2px;font-size:11px;line-height:14px;letter-spacing:-0.35px;">velocity-inlet-lar</div>
<div class="r" style="left:65px;top:391px;width:17px;height:1px;background-image:linear-gradient(90deg,#A0A0A0 50%,transparent 50%);background-size:2px 1px;"></div>
<svg class="r" style="left:82px;top:392px;" width="8" height="8" viewBox="0 0 8 8"><path d="M0.8 4.5l2.2 2.5L7.5 0.8" stroke="#0A9A0A" stroke-width="1.8" fill="none"/></svg>
<svg class="r" style="left:89px;top:383px;" width="14" height="15" viewBox="0 0 14 15"><path d="M0.5 3.5l3-3h9.5v11l-3 3H0.5z" fill="#fff" stroke="#333" stroke-width="1"/><path d="M0.5 3.5h9.5v11M10 3.5l3-3" stroke="#333" fill="none"/><path d="M0.5 3.5l3-3h9.5l-3 3z" fill="#40E040" stroke="#333" stroke-width="0.8"/></svg>
<div class="t" style="left:109px;top:385.2px;font-size:11px;line-height:14px;letter-spacing:-0.35px;">pressure-outlet</div>
<div class="r" style="left:65px;top:407px;width:17px;height:1px;background-image:linear-gradient(90deg,#A0A0A0 50%,transparent 50%);background-size:2px 1px;"></div>
<svg class="r" style="left:82px;top:408px;" width="8" height="8" viewBox="0 0 8 8"><path d="M0.8 4.5l2.2 2.5L7.5 0.8" stroke="#0A9A0A" stroke-width="1.8" fill="none"/></svg>
<svg class="r" style="left:89px;top:399px;" width="14" height="15" viewBox="0 0 14 15"><path d="M0.5 3.5l3-3h9.5v11l-3 3H0.5z" fill="#fff" stroke="#333" stroke-width="1"/><path d="M0.5 3.5h9.5v11M10 3.5l3-3" stroke="#333" fill="none"/><path d="M0.5 3.5l3-3h9.5l-3 3z" fill="#40E040" stroke="#333" stroke-width="0.8"/></svg>
<div class="t" style="left:109px;top:401.2px;font-size:11px;line-height:14px;letter-spacing:-0.35px;">velocity-inlet-sm</div>
<div class="r" style="left:65px;top:423px;width:17px;height:1px;background-image:linear-gradient(90deg,#A0A0A0 50%,transparent 50%);background-size:2px 1px;"></div>
<svg class="r" style="left:82px;top:424px;" width="8" height="8" viewBox="0 0 8 8"><path d="M0.8 4.5l2.2 2.5L7.5 0.8" stroke="#0A9A0A" stroke-width="1.8" fill="none"/></svg>
<svg class="r" style="left:89px;top:415px;" width="14" height="15" viewBox="0 0 14 15"><path d="M0.5 3.5l3-3h9.5v11l-3 3H0.5z" fill="#fff" stroke="#333" stroke-width="1"/><path d="M0.5 3.5h9.5v11M10 3.5l3-3" stroke="#333" fill="none"/><path d="M0.5 3.5l3-3h9.5l-3 3z" fill="#40E040" stroke="#333" stroke-width="0.8"/></svg>
<div class="t" style="left:109px;top:417.2px;font-size:11px;line-height:14px;letter-spacing:-0.35px;">symmetry</div>
<div class="r" style="left:65px;top:439px;width:17px;height:1px;background-image:linear-gradient(90deg,#A0A0A0 50%,transparent 50%);background-size:2px 1px;"></div>
<svg class="r" style="left:82px;top:440px;" width="8" height="8" viewBox="0 0 8 8"><path d="M0.8 4.5l2.2 2.5L7.5 0.8" stroke="#0A9A0A" stroke-width="1.8" fill="none"/></svg>
<svg class="r" style="left:89px;top:431px;" width="14" height="15" viewBox="0 0 14 15"><path d="M0.5 3.5l3-3h9.5v11l-3 3H0.5z" fill="#20E020" stroke="#333" stroke-width="1"/><path d="M0.5 3.5h9.5v11M10 3.5l3-3" stroke="#333" fill="none"/><path d="M0.5 3.5l3-3h9.5l-3 3z" fill="#40E040" stroke="#333" stroke-width="0.8"/></svg>
<div class="t" style="left:109px;top:433.2px;font-size:11px;line-height:14px;letter-spacing:-0.35px;">Fluid</div>
<div class="r" style="left:183px;top:213px;width:3px;height:253px;background:#EEEEF2;"></div>
<div class="r" style="left:186px;top:213px;width:1px;height:253px;background:#F8F6F2;"></div>
<div class="r" style="left:197px;top:163px;width:6px;height:46px;background-image:radial-gradient(circle,#B0B0B8 0.7px,transparent 0.8px);background-size:2.5px 3px;"></div>
<div class="r" style="left:209px;top:185px;width:1010px;height:1px;background:#CCCCD8;"></div>
<svg class="r" style="left:1219px;top:197px;" width="9" height="5" viewBox="0 0 9 5"><path d="M0 0h9l-4.5 5z" fill="#111"/></svg>
<svg class="r" style="left:213px;top:165px;" width="15" height="15" viewBox="0 0 15 15"><circle cx="6" cy="6" r="5" fill="#fff" stroke="#333" stroke-width="1.6"/><path d="M9.5 9.5l4 4" stroke="#333" stroke-width="2"/><path d="M3.5 6h5M3.5 6l2.5-2.5M3.5 6l2.5 2.5" stroke="#D9A300" stroke-width="1.6" fill="none"/></svg>
<svg class="r" style="left:235px;top:165px;" width="15" height="15" viewBox="0 0 15 15"><circle cx="6" cy="6" r="5" fill="#fff" stroke="#A8A8A8" stroke-width="1.6"/><path d="M9.5 9.5l4 4" stroke="#A8A8A8" stroke-width="2"/><path d="M8.5 6h-5M8.5 6l-2.5-2.5M8.5 6l-2.5 2.5" stroke="#AAA" stroke-width="1.4" fill="none"/></svg>
<div class="r" style="left:255px;top:163px;width:1px;height:20px;background:#D0D0D8;"></div>
<div class="r" style="left:259px;top:161px;width:22px;height:22px;background:#E4ECF8;border:1px solid #3C8CE0;box-sizing:border-box;"></div>
<svg class="r" style="left:263px;top:165px;" width="14" height="14" viewBox="0 0 14 14"><path d="M1 4l6-3 6 3v7l-6 3-6-3z" fill="#606060" stroke="#222"/><path d="M1 4l6 3 6-3M7 7v7" stroke="#222" fill="none"/><path d="M1 4l6-3 6 3-6 3z" fill="#909090"/></svg>
<svg class="r" style="left:285px;top:165px;" width="14" height="14" viewBox="0 0 14 14"><path d="M1 4l6-3 6 3v7l-6 3-6-3z" fill="#8A8A8A"/><path d="M1 4l6-3 6 3-6 3z" fill="#B8B8B8"/><path d="M7 7v7l6-3V4z" fill="#6A6A6A"/></svg>
<svg class="r" style="left:306px;top:164px;" width="16" height="16" viewBox="0 0 16 16"><path d="M8.5,2.5 L11,1 H15 V5 L13,6.5 H8.5 Z" fill="#fff" stroke="#333" stroke-width="0.9"/><path d="M8.5,2.5 H13 V6.5 M13,2.5 L15,1" fill="none" stroke="#333" stroke-width="0.9"/><path d="M1,9.5 L3.5,8 H8 V12.5 L6,14 H1 Z" fill="#D9A300" stroke="#333" stroke-width="0.9"/><path d="M1,9.5 H6 V14 M6,9.5 L8,8" fill="none" stroke="#333" stroke-width="0.9"/><path d="M2.5,6.5 Q3,3 6.5,2.5 M14,9 Q13.5,13 10,13.5" fill="none" stroke="#444" stroke-width="1" stroke-dasharray="1.5 1"/></svg>
<div class="r" style="left:327px;top:163px;width:1px;height:20px;background:#D0D0D8;"></div>
<svg class="r" style="left:335px;top:165px;" width="15" height="15" viewBox="0 0 15 15"><rect x="0.5" y="0.5" width="5" height="5" fill="none" stroke="#888"/><path d="M7 2l3 3" stroke="#888"/><rect x="6.5" y="7.5" width="8" height="7" fill="none" stroke="#888"/><path d="M10.5 7.5v7M6.5 11h8" stroke="#888"/></svg>
<div class="r" style="left:355px;top:163px;width:1px;height:20px;background:#D0D0D8;"></div>
<svg class="r" style="left:363px;top:165px;" width="15" height="15" viewBox="0 0 15 15"><path d="M2 6a6 6 0 0 1 10-3M13 9a6 6 0 0 1-10 3" stroke="#444" stroke-width="1.3" fill="none"/><path d="M11 1l3 3-4 1z" fill="#D9A300"/><path d="M4 14l-3-3 4-1z" fill="#D9A300"/></svg>
<svg class="r" style="left:384px;top:170px;" width="7" height="4" viewBox="0 0 7 4"><path d="M0 0h7l-3.5 4z" fill="#666"/></svg>
<svg class="r" style="left:396px;top:165px;" width="15" height="15" viewBox="0 0 15 15"><path d="M7.5 0l3 3h-6zM7.5 15l3-3h-6zM0 7.5l3-3v6zM15 7.5l-3-3v6z" fill="#D9A300"/><path d="M7.5 3v9M3 7.5h9" stroke="#333" stroke-width="1.4"/></svg>
<svg class="r" style="left:418px;top:165px;" width="15" height="15" viewBox="0 0 15 15"><circle cx="6" cy="6" r="5" fill="#fff" stroke="#333" stroke-width="1.6"/><path d="M9.5 9.5l4 4" stroke="#333" stroke-width="2"/><path d="M6 2.5l2 2H4zM6 9.5l2-2H4z" fill="#D9A300"/></svg>
<svg class="r" style="left:440px;top:165px;" width="15" height="15" viewBox="0 0 15 15"><circle cx="6" cy="6" r="5" fill="#fff" stroke="#333" stroke-width="1.6"/><path d="M9.5 9.5l4 4" stroke="#333" stroke-width="2"/><path d="M3 6h6M6 3v6" stroke="#D9A300" stroke-width="2"/></svg>
<svg class="r" style="left:462px;top:165px;" width="15" height="15" viewBox="0 0 15 15"><circle cx="6" cy="6" r="5" fill="#fff" stroke="#333" stroke-width="1.6"/><path d="M9.5 9.5l4 4" stroke="#333" stroke-width="2"/><path d="M3.5 5l2.5-1.5 2.5 1.5v3l-2.5 1.5-2.5-1.5z" fill="#4A90E2" stroke="#333" stroke-width="0.5"/></svg>
<svg class="r" style="left:484px;top:165px;" width="15" height="15" viewBox="0 0 15 15"><circle cx="6" cy="6" r="5" fill="#fff" stroke="#333" stroke-width="1.6"/><path d="M9.5 9.5l4 4" stroke="#333" stroke-width="2"/><path d="M3.5 5l2.5-1.5 2.5 1.5v3l-2.5 1.5-2.5-1.5z" fill="#30B030" stroke="#333" stroke-width="0.5"/></svg>
<svg class="r" style="left:506px;top:165px;" width="15" height="15" viewBox="0 0 15 15"><circle cx="6" cy="6" r="5" fill="#fff" stroke="#333" stroke-width="1.6"/><path d="M9.5 9.5l4 4" stroke="#333" stroke-width="2"/><path d="M6 2.5l2 2H4zM6 9.5l2-2H4z" fill="#D9A300"/><path d="M4 6h4" stroke="#333"/></svg>
<div class="r" style="left:527px;top:163px;width:1px;height:20px;background:#D0D0D8;"></div>
<div class="t" style="left:534px;top:165.2px;font-size:11px;line-height:14px;letter-spacing:-0.2px;">Select</div>
<div class="r" style="left:572px;top:165px;width:6px;height:6px;background:#E00000;"></div>
<svg class="r" style="left:575px;top:168px;" width="10" height="11" viewBox="0 0 10 11"><path d="M0 0l9 4-3.5 1.5L9 9l-1.5 1.5-3.5-3.5L2 10z" fill="#333"/></svg>
<div class="t" style="left:589px;top:165.2px;font-size:11px;line-height:14px;letter-spacing:-0.2px;">Mode</div>
<svg class="r" style="left:619px;top:170px;" width="6" height="4" viewBox="0 0 6 4"><path d="M0 0h6l-3 4z" fill="#777"/></svg>
<svg class="r" style="left:634px;top:165px;" width="15" height="15" viewBox="0 0 15 15"><path d="M1 1h5M1 1v6M9 1h5v6M1 9h5M1 9v5M9 9l4 4" stroke="#333" stroke-width="1.3" fill="none"/><rect x="2" y="2" width="4" height="3" fill="#20C020"/><rect x="10" y="2" width="3" height="3" fill="#20C020"/><rect x="2" y="10" width="3" height="3" fill="#20C020"/></svg>
<svg class="r" style="left:657px;top:165px;" width="15" height="15" viewBox="0 0 15 15"><path d="M1 4l3-3h9v9l-3 3H1z" fill="#fff" stroke="#333"/><path d="M1 4h9v9M10 4l3-3" stroke="#333" fill="none"/><circle cx="2" cy="4" r="1.5" fill="#20C020"/><path d="M5 6l3 1.5-1.2.5 1.5 2-.6.5-1.5-2-.9.8z" fill="#333"/></svg>
<svg class="r" style="left:679px;top:165px;" width="15" height="15" viewBox="0 0 15 15"><path d="M1 4l3-3h9v9l-3 3H1z" fill="#fff" stroke="#333"/><path d="M1 4h9v9M10 4l3-3" stroke="#333" fill="none"/><path d="M1 4l3-3h9" stroke="#20C020" stroke-width="1.6" fill="none"/><path d="M5 6l3 1.5-1.2.5 1.5 2-.6.5-1.5-2-.9.8z" fill="#333"/></svg>
<svg class="r" style="left:701px;top:165px;" width="15" height="15" viewBox="0 0 15 15"><path d="M1 4l3-3h9v9l-3 3H1z" fill="#fff" stroke="#333"/><path d="M1 4h9v9M10 4l3-3" stroke="#333" fill="none"/><path d="M1.5 4.5l3-3h8l-3 3z" fill="#20C020"/><path d="M5 6l3 1.5-1.2.5 1.5 2-.6.5-1.5-2-.9.8z" fill="#333"/></svg>
<div class="r" style="left:720px;top:161px;width:22px;height:22px;background:#E4ECF8;border:1px solid #3C8CE0;box-sizing:border-box;"></div>
<svg class="r" style="left:723px;top:165px;" width="15" height="15" viewBox="0 0 15 15"><path d="M1 4l3-3h9v9l-3 3H1z" fill="#20D020" stroke="#333"/><path d="M1 4h9v9M10 4l3-3" stroke="#333" fill="none"/><path d="M5 6l3 1.5-1.2.5 1.5 2-.6.5-1.5-2-.9.8z" fill="#333"/></svg>
<svg class="r" style="left:746px;top:165px;" width="15" height="15" viewBox="0 0 15 15"><path d="M1 4l3-3h10v10l-3 3H1z" fill="#fff" stroke="#333"/><path d="M1 4h10v10M11 4l3-3M4.3 4v10M7.6 4v10M1 7.3h10M1 10.6h10" stroke="#333" stroke-width="0.7" fill="none"/><rect x="4.5" y="7.5" width="3" height="3" fill="#4A90E2"/></svg>
<svg class="r" style="left:768px;top:165px;" width="15" height="15" viewBox="0 0 15 15"><path d="M1 4l3-3h10v10l-3 3H1z" fill="#fff" stroke="#333"/><path d="M1 4h10v10M11 4l3-3M4.3 4v10M7.6 4v10M1 7.3h10M1 10.6h10" stroke="#333" stroke-width="0.7" fill="none"/><rect x="4.5" y="7.5" width="3" height="3" fill="#30B030"/></svg>
<svg class="r" style="left:790px;top:165px;" width="15" height="15" viewBox="0 0 15 15"><path d="M1 4l3-3h10v10l-3 3H1z" fill="#fff" stroke="#333"/><path d="M1 4h10v10M11 4l3-3M4.3 4v10M7.6 4v10M1 7.3h10M1 10.6h10" stroke="#333" stroke-width="0.7" fill="none"/><rect x="4.5" y="7.5" width="3" height="3" fill="#207020"/></svg>
<svg class="r" style="left:811px;top:165px;" width="15" height="15" viewBox="0 0 15 15"><text x="7.5" y="5" font-family="Liberation Sans" font-size="5" fill="#999" text-anchor="middle">X.Y.Z</text><path d="M5 7l5 6" stroke="#D9A300" stroke-width="1.6"/><path d="M4 6h4l-2 3z" fill="#D9A300"/></svg>
<svg class="r" style="left:833px;top:165px;" width="15" height="15" viewBox="0 0 15 15"><rect x="1" y="1" width="12" height="5" rx="2.5" fill="#fff" stroke="#333"/><circle cx="4" cy="3.5" r="1" fill="#333"/><circle cx="7" cy="3.5" r="1" fill="#333"/><circle cx="10" cy="3.5" r="1" fill="#333"/><path d="M5 8l5 6" stroke="#D9A300" stroke-width="1.6"/></svg>
<svg class="r" style="left:855px;top:165px;" width="15" height="15" viewBox="0 0 15 15"><rect x="1" y="2" width="12" height="10" fill="#E8E8E8" stroke="#AAA"/><text x="7" y="9.5" font-family="Liberation Sans" font-size="6" fill="#AAA" text-anchor="middle">Abc</text><path d="M10 10l4 4" stroke="#BBB"/></svg>
<div class="r" style="left:877px;top:163px;width:1px;height:20px;background:#D0D0D8;"></div>
<svg class="r" style="left:884px;top:164px;" width="15" height="16" viewBox="0 0 15 16"><rect x="0.5" y="1.5" width="14" height="14" fill="#E8C050" stroke="#555"/><path d="M5 0.5h5v3H5z" fill="#555"/></svg>
<div class="t" style="left:901px;top:165.2px;font-size:11px;line-height:14px;letter-spacing:-0.25px;">Clipboard</div>
<svg class="r" style="left:947px;top:170px;" width="6" height="4" viewBox="0 0 6 4"><path d="M0 0h6l-3 4z" fill="#777"/></svg>
<div class="t" style="left:965px;top:165.2px;font-size:11px;line-height:14px;letter-spacing:-0.15px;">[ Empty ]</div>
<svg class="r" style="left:213px;top:192px;" width="15" height="15" viewBox="0 0 15 15"><path d="M1 5l6-3 7 3v7l-7 3-6-3z" fill="#fff" stroke="#444"/><path d="M1 5l6 3 7-3M7 8v7" stroke="#444" fill="none"/><path d="M1.5 5.5l5.5 2.8v6.2l-5.5-2.8z" fill="#20D020"/><path d="M7 0.5v3M5.5 2h3" stroke="#D9A300" stroke-width="1.2"/></svg>
<div class="t" style="left:231px;top:193.2px;font-size:11px;line-height:14px;letter-spacing:-0.2px;">Extend</div>
<svg class="r" style="left:265px;top:198px;" width="6" height="4" viewBox="0 0 6 4"><path d="M0 0h6l-3 4z" fill="#777"/></svg>
<svg class="r" style="left:283px;top:191px;" width="15" height="16" viewBox="0 0 15 16"><path d="M7.5 1a4 4 0 0 1 4 4c0 3-4 7-4 7s-4-4-4-7a4 4 0 0 1 4-4z" fill="#D9A300"/><circle cx="7.5" cy="5" r="1.4" fill="#fff"/><path d="M0.5 13.5h14" stroke="#333"/><path d="M0.5 13.5v-2M14.5 13.5v-2" stroke="#333"/></svg>
<div class="t" style="left:300px;top:193.2px;font-size:11px;line-height:14px;letter-spacing:-0.2px;">Select By</div>
<svg class="r" style="left:346px;top:198px;" width="6" height="4" viewBox="0 0 6 4"><path d="M0 0h6l-3 4z" fill="#777"/></svg>
<svg class="r" style="left:365px;top:192px;" width="15" height="15" viewBox="0 0 15 15"><path d="M0 7.5h4" stroke="#D9A300" stroke-width="1.4"/><path d="M5 4l3-3h6v7l-3 3H5z" fill="#20D020" stroke="#333" stroke-width="0.8"/><path d="M5 4h6v7M11 4l3-3" stroke="#333" fill="none" stroke-width="0.8"/></svg>
<div class="t" style="left:382px;top:193.2px;font-size:11px;line-height:14px;letter-spacing:-0.2px;">Convert</div>
<svg class="r" style="left:421px;top:198px;" width="6" height="4" viewBox="0 0 6 4"><path d="M0 0h6l-3 4z" fill="#777"/></svg>
<div class="r" style="left:187px;top:159px;width:1044px;height:54px;background:transparent;"></div>
<div class="r" style="left:187px;top:213px;width:1044px;height:662px;background:linear-gradient(#6C8CDD,#FFFFFF);"></div>
<div class="r" style="left:0px;top:874px;width:299px;height:1px;background:#1A3A5A;"></div>
<div class="r" style="left:0px;top:875px;width:1231px;height:20px;background:#0072C6;"></div>
<div class="t" style="left:8px;top:879.2px;font-size:11px;line-height:14px;color:#fff;letter-spacing:-0.1px;">Ready</div>
<div class="t" style="left:808px;top:879.2px;font-size:11px;line-height:14px;color:#fff;letter-spacing:-0.2px;">1 Message</div>
<div class="t" style="left:877px;top:879.2px;font-size:11px;line-height:14px;color:#fff;letter-spacing:-0.2px;">No Selection</div>
<div class="t" style="left:956px;top:879.2px;font-size:11px;line-height:14px;color:#fff;letter-spacing:-0.25px;">Metric (m, kg, N, s, V, A)</div>
<div class="t" style="left:1083px;top:879.2px;font-size:11px;line-height:14px;color:#fff;letter-spacing:-0.2px;">Degrees</div>
<div class="t" style="left:1135.5px;top:879.2px;font-size:11px;line-height:14px;color:#fff;letter-spacing:-0.2px;">rad/s</div>
<div class="t" style="left:1172px;top:879.2px;font-size:11px;line-height:14px;color:#fff;letter-spacing:-0.2px;">Celsius</div>
<svg class="r" style="left:1219px;top:883px;" width="8" height="8" viewBox="0 0 8 8"><g fill="#9CC4E8"><rect x="6" y="0" width="1" height="1"/><rect x="4" y="2" width="1" height="1"/><rect x="6" y="2" width="1" height="1"/><rect x="2" y="4" width="1" height="1"/><rect x="4" y="4" width="1" height="1"/><rect x="6" y="4" width="1" height="1"/><rect x="0" y="6" width="1" height="1"/><rect x="2" y="6" width="1" height="1"/><rect x="4" y="6" width="1" height="1"/><rect x="6" y="6" width="1" height="1"/></g></svg>
<div class="r" style="left:0px;top:895px;width:1233px;height:2px;background:#C8C4BC;"></div>
<div class="r" style="left:0px;top:897px;width:407px;height:4px;background:#1C2030;"></div>
<div class="r" style="left:407px;top:897px;width:826px;height:4px;background:#D4D0C8;"></div>
<div class="r" style="left:412px;top:897px;width:1px;height:4px;background:#A0A0A0;"></div>
<div class="r" style="left:0px;top:466px;width:299px;height:409px;background:#0072C6;"></div>
<div class="t" style="left:5px;top:469.2px;font-size:11px;line-height:14px;color:#fff;letter-spacing:-0.2px;">Details of "Mesh"</div>
<div class="r" style="left:92px;top:472px;width:168px;height:5px;background-image:radial-gradient(circle,#5AA0E0 0.7px,transparent 0.8px);background-size:3px 2.5px;"></div>
<svg class="r" style="left:249px;top:473px;" width="9" height="5" viewBox="0 0 9 5"><path d="M0 0h9l-4.5 5z" fill="#fff"/></svg>
<svg class="r" style="left:264px;top:469px;" width="9" height="14" viewBox="0 0 9 14"><path d="M2 0.5h5M2.5 0.5v8M6.5 0.5v8M0.5 8.5h8M4.5 8.5v5" stroke="#fff" stroke-width="1.4" fill="none"/></svg>
<svg class="r" style="left:280px;top:470px;" width="11" height="11" viewBox="0 0 11 11"><path d="M1 1l9 9M10 1l-9 9" stroke="#fff" stroke-width="1.5"/></svg>
<div class="r" style="left:0px;top:485px;width:297px;height:389px;background:#fff;"></div>
<div class="r" style="left:0px;top:485px;width:297px;height:4px;background:#F4F4F4;"></div>
<div class="r" style="left:0px;top:489px;width:280px;height:381px;overflow:hidden;">
<div class="r" style="left:15px;top:0px;width:265px;height:19px;border:1px solid #A0A0A0;box-sizing:border-box;background:#fff;"></div>
<svg class="r" style="left:4px;top:5px" width="9" height="9"><rect x="0.5" y="0.5" width="8" height="8" fill="#fff" stroke="#888"/><path d="M2 4.5h5" stroke="#000"/></svg>
<div class="t" style="left:19px;top:2.9px;font-size:12px;line-height:14px;font-weight:700;letter-spacing:-0.3px;">Display</div>
<div class="r" style="left:15px;top:18px;width:149px;height:19px;border:1px solid #A0A0A0;box-sizing:border-box;background:#fff;"></div>
<div class="r" style="left:163px;top:18px;width:117px;height:19px;border:1px solid #A0A0A0;box-sizing:border-box;background:#fff;"></div>
<div class="t" style="left:19px;top:20.9px;font-size:11px;line-height:14px;letter-spacing:-0.2px;">Display Style</div>
<div class="t" style="left:167px;top:20.9px;font-size:11px;line-height:14px;letter-spacing:-0.2px;">Use Geometry Setting</div>
<div class="r" style="left:15px;top:36px;width:265px;height:19px;border:1px solid #A0A0A0;box-sizing:border-box;background:#fff;"></div>
<svg class="r" style="left:4px;top:41px" width="9" height="9"><rect x="0.5" y="0.5" width="8" height="8" fill="#fff" stroke="#888"/><path d="M2 4.5h5" stroke="#000"/></svg>
<div class="t" style="left:19px;top:38.9px;font-size:12px;line-height:14px;font-weight:700;letter-spacing:-0.3px;">Defaults</div>
<div class="r" style="left:15px;top:54px;width:149px;height:19px;border:1px solid #A0A0A0;box-sizing:border-box;background:#fff;"></div>
<div class="r" style="left:163px;top:54px;width:117px;height:19px;border:1px solid #A0A0A0;box-sizing:border-box;background:#fff;"></div>
<div class="t" style="left:19px;top:56.9px;font-size:11px;line-height:14px;letter-spacing:-0.2px;">Physics Preference</div>
<div class="t" style="left:167px;top:56.9px;font-size:11px;line-height:14px;letter-spacing:-0.2px;">CFD</div>
<div class="r" style="left:15px;top:72px;width:149px;height:19px;border:1px solid #A0A0A0;box-sizing:border-box;background:#fff;"></div>
<div class="r" style="left:163px;top:72px;width:117px;height:19px;border:1px solid #A0A0A0;box-sizing:border-box;background:#fff;"></div>
<div class="t" style="left:19px;top:74.9px;font-size:11px;line-height:14px;letter-spacing:-0.2px;">Solver Preference</div>
<div class="t" style="left:167px;top:74.9px;font-size:11px;line-height:14px;letter-spacing:-0.2px;">Fluent</div>
<div class="r" style="left:15px;top:90px;width:149px;height:19px;border:1px solid #A0A0A0;box-sizing:border-box;background:#fff;"></div>
<div class="r" style="left:163px;top:90px;width:117px;height:19px;border:1px solid #A0A0A0;box-sizing:border-box;background:#fff;"></div>
<div class="r" style="left:19px;top:94px;width:11px;height:11px;border:1px solid #D0D0D0;box-sizing:border-box;"></div>
<div class="t" style="left:35px;top:92.9px;font-size:11px;line-height:14px;letter-spacing:-0.2px;">Element Size</div>
<div class="t" style="left:167px;top:92.9px;font-size:11px;line-height:14px;letter-spacing:-0.2px;">Default (2.9288e-002 ...</div>
<div class="r" style="left:15px;top:108px;width:149px;height:19px;border:1px solid #A0A0A0;box-sizing:border-box;background:#fff;"></div>
<div class="r" style="left:163px;top:108px;width:117px;height:19px;border:1px solid #A0A0A0;box-sizing:border-box;background:#fff;"></div>
<div class="t" style="left:19px;top:110.9px;font-size:11px;line-height:14px;letter-spacing:-0.2px;">Export Format</div>
<div class="t" style="left:167px;top:110.9px;font-size:11px;line-height:14px;letter-spacing:-0.2px;">Standard</div>
<div class="r" style="left:15px;top:126px;width:149px;height:19px;border:1px solid #A0A0A0;box-sizing:border-box;background:#fff;"></div>
<div class="r" style="left:163px;top:126px;width:117px;height:19px;border:1px solid #A0A0A0;box-sizing:border-box;background:#fff;"></div>
<div class="t" style="left:19px;top:128.9px;font-size:11px;line-height:14px;letter-spacing:-0.2px;">Export Preview Surface Mesh</div>
<div class="t" style="left:167px;top:128.9px;font-size:11px;line-height:14px;letter-spacing:-0.2px;">No</div>
<div class="r" style="left:15px;top:144px;width:265px;height:19px;border:1px solid #A0A0A0;box-sizing:border-box;background:#fff;"></div>
<svg class="r" style="left:4px;top:149px" width="9" height="9"><rect x="0.5" y="0.5" width="8" height="8" fill="#fff" stroke="#888"/><path d="M2 4.5h5" stroke="#000"/><path d="M4.5 2v5" stroke="#000"/></svg>
<div class="t" style="left:19px;top:146.9px;font-size:12px;line-height:14px;font-weight:700;letter-spacing:-0.3px;">Sizing</div>
<div class="r" style="left:15px;top:162px;width:265px;height:19px;border:1px solid #A0A0A0;box-sizing:border-box;background:#fff;"></div>
<svg class="r" style="left:4px;top:167px" width="9" height="9"><rect x="0.5" y="0.5" width="8" height="8" fill="#fff" stroke="#888"/><path d="M2 4.5h5" stroke="#000"/></svg>
<div class="t" style="left:19px;top:164.9px;font-size:12px;line-height:14px;font-weight:700;letter-spacing:-0.3px;">Quality</div>
<div class="r" style="left:15px;top:180px;width:149px;height:19px;border:1px solid #A0A0A0;box-sizing:border-box;background:#fff;"></div>
<div class="r" style="left:163px;top:180px;width:117px;height:19px;border:1px solid #A0A0A0;box-sizing:border-box;background:#fff;"></div>
<div class="t" style="left:19px;top:182.9px;font-size:11px;line-height:14px;letter-spacing:-0.2px;">Check Mesh Quality</div>
<div class="t" style="left:167px;top:182.9px;font-size:11px;line-height:14px;letter-spacing:-0.2px;">Yes, Errors</div>
<div class="r" style="left:15px;top:198px;width:149px;height:19px;border:1px solid #A0A0A0;box-sizing:border-box;background:#fff;"></div>
<div class="r" style="left:163px;top:198px;width:117px;height:19px;border:1px solid #A0A0A0;box-sizing:border-box;background:#fff;"></div>
<div class="r" style="left:19px;top:202px;width:11px;height:11px;border:1px solid #D0D0D0;box-sizing:border-box;"></div>
<div class="t" style="left:35px;top:200.9px;font-size:11px;line-height:14px;letter-spacing:-0.2px;">Target Skewness</div>
<div class="t" style="left:167px;top:200.9px;font-size:11px;line-height:14px;letter-spacing:-0.2px;">Default (0.9)</div>
<div class="r" style="left:15px;top:216px;width:149px;height:19px;border:1px solid #A0A0A0;box-sizing:border-box;background:#fff;"></div>
<div class="r" style="left:163px;top:216px;width:117px;height:19px;border:1px solid #A0A0A0;box-sizing:border-box;background:#fff;"></div>
<div class="t" style="left:19px;top:218.9px;font-size:11px;line-height:14px;letter-spacing:-0.2px;">Smoothing</div>
<div class="t" style="left:167px;top:218.9px;font-size:11px;line-height:14px;letter-spacing:-0.2px;">High</div>
<div class="r" style="left:15px;top:234px;width:149px;height:19px;border:1px solid #A0A0A0;box-sizing:border-box;background:#fff;"></div>
<div class="r" style="left:163px;top:234px;width:117px;height:19px;border:1px solid #A0A0A0;box-sizing:border-box;background:#fff;"></div>
<div class="t" style="left:19px;top:236.9px;font-size:11px;line-height:14px;letter-spacing:-0.2px;">Mesh Metric</div>
<div class="t" style="left:167px;top:236.9px;font-size:11px;line-height:14px;letter-spacing:-0.2px;">None</div>
<div class="r" style="left:15px;top:252px;width:265px;height:19px;border:1px solid #A0A0A0;box-sizing:border-box;background:#fff;"></div>
<svg class="r" style="left:4px;top:257px" width="9" height="9"><rect x="0.5" y="0.5" width="8" height="8" fill="#fff" stroke="#888"/><path d="M2 4.5h5" stroke="#000"/></svg>
<div class="t" style="left:19px;top:254.9px;font-size:12px;line-height:14px;font-weight:700;letter-spacing:-0.3px;">Inflation</div>
<div class="r" style="left:15px;top:270px;width:149px;height:19px;border:1px solid #A0A0A0;box-sizing:border-box;background:#fff;"></div>
<div class="r" style="left:163px;top:270px;width:117px;height:19px;border:1px solid #A0A0A0;box-sizing:border-box;background:#fff;"></div>
<div class="t" style="left:19px;top:272.9px;font-size:11px;line-height:14px;letter-spacing:-0.2px;">Use Automatic Inflation</div>
<div class="t" style="left:167px;top:272.9px;font-size:11px;line-height:14px;letter-spacing:-0.2px;">Program Controlled</div>
<div class="r" style="left:15px;top:288px;width:149px;height:19px;border:1px solid #A0A0A0;box-sizing:border-box;background:#fff;"></div>
<div class="r" style="left:163px;top:288px;width:117px;height:19px;border:1px solid #A0A0A0;box-sizing:border-box;background:#fff;"></div>
<div class="t" style="left:19px;top:290.9px;font-size:11px;line-height:14px;letter-spacing:-0.2px;">Inflation Option</div>
<div class="t" style="left:167px;top:290.9px;font-size:11px;line-height:14px;letter-spacing:-0.2px;">Smooth Transition</div>
<div class="r" style="left:15px;top:306px;width:149px;height:19px;border:1px solid #A0A0A0;box-sizing:border-box;background:#fff;"></div>
<div class="r" style="left:163px;top:306px;width:117px;height:19px;border:1px solid #A0A0A0;box-sizing:border-box;background:#fff;"></div>
<div class="r" style="left:19px;top:310px;width:11px;height:11px;border:1px solid #D0D0D0;box-sizing:border-box;"></div>
<div class="t" style="left:35px;top:308.9px;font-size:11px;line-height:14px;letter-spacing:-0.2px;">Transition Ratio</div>
<div class="t" style="left:167px;top:308.9px;font-size:11px;line-height:14px;letter-spacing:-0.2px;">0.272</div>
<div class="r" style="left:15px;top:324px;width:149px;height:19px;border:1px solid #A0A0A0;box-sizing:border-box;background:#fff;"></div>
<div class="r" style="left:163px;top:324px;width:117px;height:19px;border:1px solid #A0A0A0;box-sizing:border-box;background:#fff;"></div>
<div class="r" style="left:19px;top:328px;width:11px;height:11px;border:1px solid #D0D0D0;box-sizing:border-box;"></div>
<div class="t" style="left:35px;top:326.9px;font-size:11px;line-height:14px;letter-spacing:-0.2px;">Maximum Layers</div>
<div class="t" style="left:167px;top:326.9px;font-size:11px;line-height:14px;letter-spacing:-0.2px;">5</div>
<div class="r" style="left:15px;top:342px;width:149px;height:19px;border:1px solid #A0A0A0;box-sizing:border-box;background:#fff;"></div>
<div class="r" style="left:163px;top:342px;width:117px;height:19px;border:1px solid #A0A0A0;box-sizing:border-box;background:#fff;"></div>
<div class="r" style="left:19px;top:346px;width:11px;height:11px;border:1px solid #D0D0D0;box-sizing:border-box;"></div>
<div class="t" style="left:35px;top:344.9px;font-size:11px;line-height:14px;letter-spacing:-0.2px;">Growth Rate</div>
<div class="t" style="left:167px;top:344.9px;font-size:11px;line-height:14px;letter-spacing:-0.2px;">1.2</div>
<div class="r" style="left:15px;top:360px;width:149px;height:19px;border:1px solid #A0A0A0;box-sizing:border-box;background:#fff;"></div>
<div class="r" style="left:163px;top:360px;width:117px;height:19px;border:1px solid #A0A0A0;box-sizing:border-box;background:#fff;"></div>
<div class="t" style="left:19px;top:362.9px;font-size:11px;line-height:14px;letter-spacing:-0.2px;">Inflation Algorithm</div>
<div class="t" style="left:167px;top:362.9px;font-size:11px;line-height:14px;letter-spacing:-0.2px;">Pre</div>
<div class="r" style="left:15px;top:378px;width:149px;height:19px;border:1px solid #A0A0A0;box-sizing:border-box;background:#fff;"></div>
<div class="r" style="left:163px;top:378px;width:117px;height:19px;border:1px solid #A0A0A0;box-sizing:border-box;background:#fff;"></div>
<div class="t" style="left:19px;top:380.9px;font-size:11px;line-height:14px;letter-spacing:-0.2px;"></div>
<div class="t" style="left:167px;top:380.9px;font-size:11px;line-height:14px;letter-spacing:-0.2px;"></div>
</div>
<div class="r" style="left:280px;top:489px;width:16px;height:381px;background-color:#E0E0E0;background-image:linear-gradient(45deg,#B8B8B8 25%,transparent 25%,transparent 75%,#B8B8B8 75%),linear-gradient(45deg,#B8B8B8 25%,transparent 25%,transparent 75%,#B8B8B8 75%);background-size:2px 2px;background-position:0 0,1px 1px;"></div>
<div class="r" style="left:280px;top:489px;width:16px;height:16px;background:#C0C0C0;border-left:1px solid #fff;border-top:1px solid #fff;border-right:1px solid #000;border-bottom:1px solid #000;box-sizing:border-box;"></div>
<svg class="r" style="left:283px;top:494px" width="9" height="5"><path d="M0 5h9l-4.5-5z" fill="#000"/></svg>
<div class="r" style="left:280px;top:505px;width:16px;height:305px;background:#C0C0C0;border-left:1px solid #fff;border-top:1px solid #fff;border-right:1px solid #000;border-bottom:1px solid #000;box-sizing:border-box;"></div>
<div class="r" style="left:280px;top:855px;width:16px;height:16px;background:#C0C0C0;border-left:1px solid #fff;border-top:1px solid #fff;border-right:1px solid #000;border-bottom:1px solid #000;box-sizing:border-box;"></div>
<svg class="r" style="left:283px;top:860px" width="9" height="5"><path d="M0 0h9l-4.5 5z" fill="#000"/></svg>
<div class="r" style="left:296px;top:485px;width:3px;height:390px;background:#fff;"></div>
<div class="r" style="left:298px;top:466px;width:1px;height:409px;background:#0072C6;"></div>
<div class="r" style="left:299px;top:470px;width:9px;height:404px;background:linear-gradient(90deg,rgba(60,60,90,0.12),rgba(60,60,90,0.04) 60%,rgba(60,60,90,0));"></div>
<div class="r" style="left:0px;top:871px;width:297px;height:2px;background:#fff;"></div>
<div class="r" style="left:0px;top:873px;width:299px;height:1px;background:#2A7FD0;"></div>
<div class="r" style="left:0px;top:873px;width:157px;height:1px;background:#1A3050;"></div>
<div class="r" style="left:167px;top:873px;width:16px;height:1px;background:#1A3050;"></div>
<div class="r" style="left:157px;top:873px;width:10px;height:1px;background:#C0C8D0;"></div>
<svg class="r" style="left:0;top:0" width="1233" height="901" viewBox="0 0 1233 901"><defs><linearGradient id="gV" gradientUnits="userSpaceOnUse" x1="746" y1="281" x2="850" y2="251"><stop offset="0.000" stop-color="#202020"/><stop offset="0.100" stop-color="#585858"/><stop offset="0.350" stop-color="#909090"/><stop offset="0.620" stop-color="#B8B8B8"/><stop offset="0.850" stop-color="#B0B0B0"/><stop offset="0.950" stop-color="#787878"/><stop offset="1.000" stop-color="#484848"/></linearGradient><linearGradient id="gH" gradientUnits="userSpaceOnUse" x1="517" y1="702" x2="548" y2="810"><stop offset="0.000" stop-color="#404040"/><stop offset="0.080" stop-color="#707070"/><stop offset="0.250" stop-color="#A0A0A0"/><stop offset="0.500" stop-color="#B8B8B8"/><stop offset="0.750" stop-color="#A4A4A4"/><stop offset="0.900" stop-color="#7C7C7C"/><stop offset="1.000" stop-color="#484848"/></linearGradient><radialGradient id="gE" gradientUnits="userSpaceOnUse" cx="700" cy="530" r="227"><stop offset="0.507" stop-color="#202020"/><stop offset="0.556" stop-color="#585858"/><stop offset="0.680" stop-color="#909090"/><stop offset="0.813" stop-color="#B8B8B8"/><stop offset="0.926" stop-color="#B0B0B0"/><stop offset="0.975" stop-color="#787878"/><stop offset="1.000" stop-color="#484848"/></radialGradient><linearGradient id="gS" gradientUnits="userSpaceOnUse" x1="884" y1="663" x2="905.3" y2="657.4"><stop offset="0" stop-color="#404040"/><stop offset="0.5" stop-color="#B0B0B0"/><stop offset="0.8" stop-color="#C8C8C8"/><stop offset="1" stop-color="#808080"/></linearGradient><clipPath id="pc"><path d="M746,281 L854,249 L891.7,380 C893.2,384.8 897.5,399.2 900.4,408.8 C903.3,418.4 906.1,428.1 909.0,437.7 C911.9,447.3 915.3,456.9 917.7,466.5 C920.1,476.1 922.1,485.8 923.5,495.4 C924.9,505.0 925.4,514.6 925.8,524.2 C926.2,533.8 926.6,543.4 925.8,553.0 C925.0,562.6 923.2,572.3 921.1,581.9 C919.0,591.5 916.0,603.7 913.4,610.7 C910.8,617.7 906.7,621.7 905.4,623.9 L932.6,727 L905.4,734.8 L884.1,663 C881.8,665.8 875.3,674.5 870.3,680.0 C865.3,685.5 859.5,691.5 854.1,696.2 C848.7,700.9 844.7,703.5 837.9,708.4 C831.1,713.3 821.6,720.5 813.5,725.4 C805.4,730.3 797.3,734.2 789.2,737.6 C781.1,741.0 774.4,742.7 764.9,745.7 C755.4,748.7 737.8,753.8 732.4,755.4 L546.8,809.8 L517.3,702.3 L737.3,637 C739.3,636.2 745.4,634.1 749.5,632.1 C753.6,630.1 757.7,627.5 761.7,624.8 C765.8,622.1 769.8,619.5 773.8,615.7 C777.8,612.0 782.2,607.1 786.0,602.3 C789.8,597.5 793.5,592.1 796.7,586.7 C799.9,581.3 802.8,575.6 805.0,570.0 C807.2,564.4 808.8,558.8 810.0,553.3 C811.2,547.8 811.7,542.2 812.0,536.7 C812.3,531.2 812.1,525.6 811.7,520.0 C811.3,514.4 810.8,508.9 809.7,503.3 C808.6,497.8 806.6,492.2 805.0,486.7 C803.4,481.1 802.0,477.8 800.0,470.0 C798.0,462.2 793.9,445.0 792.7,440.0 Z"/></clipPath></defs><g clip-path="url(#pc)" shape-rendering="crispEdges"><clipPath id="cH"><path d="M500,530 L700,530 L793,830 L500,830 Z"/></clipPath><clipPath id="cV"><path d="M600,240 L960,240 L960,452 L700,530 L600,530 Z"/></clipPath><clipPath id="cE"><path d="M700,530 L960,452 L960,830 L793,830 Z"/></clipPath><clipPath id="cS"><path d="M905.4,623.9 L932.6,727 L905.4,734.8 L884.9,661.8 L895,640 Z"/></clipPath><rect x="500" y="240" width="440" height="580" fill="url(#gH)" clip-path="url(#cH)"/><rect x="500" y="240" width="440" height="580" fill="url(#gV)" clip-path="url(#cV)"/><rect x="500" y="240" width="440" height="580" fill="url(#gE)" clip-path="url(#cE)"/><path d="M352.1,325.6L927.7,156.2M353.6,330.6L929.2,161.2M355.0,335.6L930.6,166.2M356.5,340.5L932.1,171.1M358.0,345.5L933.6,176.1M359.5,350.5L935.0,181.1M360.9,355.5L936.5,186.1M362.4,360.5L938.0,191.1M363.9,365.5L939.4,196.1M365.3,370.5L940.9,201.0M366.8,375.4L942.4,206.0M368.3,380.4L943.8,211.0M369.7,385.4L945.3,216.0M371.2,390.4L946.8,221.0M372.7,395.4L948.2,226.0M374.1,400.4L949.7,231.0M375.6,405.3L951.2,235.9M377.1,410.3L952.6,240.9M378.5,415.3L954.1,245.9M380.0,420.3L955.6,250.9M381.5,425.3L957.0,255.9M382.9,430.3L958.5,260.9M384.4,435.3L960.0,265.8M385.9,440.2L961.4,270.8M387.3,445.2L962.9,275.8M388.8,450.2L964.4,280.8M390.3,455.2L965.8,285.8M391.7,460.2L967.3,290.8M393.2,465.2L968.8,295.8M394.7,470.1L970.2,300.7M396.1,475.1L971.7,305.7M397.6,480.1L973.2,310.7M399.1,485.1L974.6,315.7M400.5,490.1L976.1,320.7M402.0,495.1L977.6,325.7M403.5,500.1L979.1,330.6M404.9,505.0L980.5,335.6M406.4,510.0L982.0,340.6M407.9,515.0L983.5,345.6M409.3,520.0L984.9,350.6M410.8,525.0L986.4,355.6M412.3,530.0L987.9,360.6M413.7,534.9L989.3,365.5M415.2,539.9L990.8,370.5M416.7,544.9L992.3,375.5M418.1,549.9L993.7,380.5M419.6,554.9L995.2,385.5M421.1,559.9L996.7,390.5M422.5,564.9L998.1,395.5M424.0,569.8L999.6,400.4M425.5,574.8L1001.1,405.4M426.9,579.8L1002.5,410.4M428.4,584.8L1004.0,415.4M429.9,589.8L1005.5,420.4M431.3,594.8L1006.9,425.4M432.8,599.7L1008.4,430.3M434.3,604.7L1009.9,435.3M435.7,609.7L1011.3,440.3M437.2,614.7L1012.8,445.3M438.7,619.7L1014.3,450.3M440.1,624.7L1015.7,455.3M441.6,629.7L1017.2,460.3M443.1,634.6L1018.7,465.2M444.5,639.6L1020.1,470.2M446.0,644.6L1021.6,475.2M447.5,649.6L1023.1,480.2M448.9,654.6L1024.5,485.2M450.4,659.6L1026.0,490.2M451.9,664.5L1027.5,495.1M453.3,669.5L1028.9,500.1M454.8,674.5L1030.4,505.1M456.3,679.5L1031.9,510.1M457.7,684.5L1033.3,515.1M459.2,689.5L1034.8,520.1M460.7,694.5L1036.3,525.1M462.1,699.4L1037.7,530.0M463.6,704.4L1039.2,535.0M465.1,709.4L1040.7,540.0M466.5,714.4L1042.1,545.0M468.0,719.4L1043.6,550.0M469.5,724.4L1045.1,555.0M470.9,729.4L1046.5,559.9M472.4,734.3L1048.0,564.9M473.9,739.3L1049.5,569.9M475.4,744.3L1050.9,574.9M476.8,749.3L1052.4,579.9M478.3,754.3L1053.9,584.9M479.8,759.3L1055.3,589.9M481.2,764.2L1056.8,594.8M482.7,769.2L1058.3,599.8M484.2,774.2L1059.7,604.8M485.6,779.2L1061.2,609.8M487.1,784.2L1062.7,614.8M488.6,789.2L1064.1,619.8M490.0,794.2L1065.6,624.7M491.5,799.1L1067.1,629.7M493.0,804.1L1068.5,634.7M494.4,809.1L1070.0,639.7M495.9,814.1L1071.5,644.7M497.4,819.1L1072.9,649.7M498.8,824.1L1074.4,654.7M500.3,829.0L1075.9,659.6M501.8,834.0L1077.3,664.6M503.2,839.0L1078.8,669.6M504.7,844.0L1080.3,674.6M506.2,849.0L1081.7,679.6M507.6,854.0L1083.2,684.6M509.1,859.0L1084.7,689.5M510.6,863.9L1086.1,694.5M512.0,868.9L1087.6,699.5M513.5,873.9L1089.1,704.5M515.0,878.9L1090.5,709.5M516.4,883.9L1092.0,714.5M517.9,888.9L1093.5,719.5M519.4,893.8L1095.0,724.4M520.8,898.8L1096.4,729.4M522.3,903.8L1097.9,734.4M715.6,104.9L1150.1,518.6M712.0,108.6L1146.5,522.4M708.4,112.4L1142.9,526.2M704.8,116.2L1139.3,529.9M701.3,119.9L1135.8,533.7M697.7,123.7L1132.2,537.5M694.1,127.4L1128.6,541.2M690.5,131.2L1125.0,545.0M686.9,135.0L1121.4,548.7M683.3,138.7L1117.8,552.5M679.8,142.5L1114.3,556.3M676.2,146.3L1110.7,560.0M672.6,150.0L1107.1,563.8M669.0,153.8L1103.5,567.6M665.4,157.5L1099.9,571.3M661.8,161.3L1096.3,575.1M658.2,165.1L1092.8,578.8M654.7,168.8L1089.2,582.6M651.1,172.6L1085.6,586.4M647.5,176.4L1082.0,590.1M643.9,180.1L1078.4,593.9M640.3,183.9L1074.8,597.7M636.7,187.6L1071.3,601.4M633.2,191.4L1067.7,605.2M629.6,195.2L1064.1,608.9M626.0,198.9L1060.5,612.7M622.4,202.7L1056.9,616.5M618.8,206.5L1053.3,620.2M615.2,210.2L1049.8,624.0M611.7,214.0L1046.2,627.8M608.1,217.8L1042.6,631.5M604.5,221.5L1039.0,635.3M600.9,225.3L1035.4,639.1M597.3,229.0L1031.8,642.8M593.7,232.8L1028.3,646.6M590.2,236.6L1024.7,650.3M586.6,240.3L1021.1,654.1M583.0,244.1L1017.5,657.9M579.4,247.9L1013.9,661.6M575.8,251.6L1010.3,665.4M572.2,255.4L1006.8,669.2M568.7,259.1L1003.2,672.9M565.1,262.9L999.6,676.7M561.5,266.7L996.0,680.4M557.9,270.4L992.4,684.2M554.3,274.2L988.8,688.0M550.7,278.0L985.3,691.7M547.2,281.7L981.7,695.5M543.6,285.5L978.1,699.3M540.0,289.2L974.5,703.0M536.4,293.0L970.9,706.8M532.8,296.8L967.3,710.5M529.2,300.5L963.8,714.3M525.7,304.3L960.2,718.1M522.1,308.1L956.6,721.8M518.5,311.8L953.0,725.6M514.9,315.6L949.4,729.4M511.3,319.4L945.8,733.1M507.7,323.1L942.3,736.9M504.2,326.9L938.7,740.6M500.6,330.6L935.1,744.4M497.0,334.4L931.5,748.2M493.4,338.2L927.9,751.9M489.8,341.9L924.3,755.7M486.2,345.7L920.8,759.5M482.7,349.5L917.2,763.2M479.1,353.2L913.6,767.0M475.5,357.0L910.0,770.8M471.9,360.7L906.4,774.5M468.3,364.5L902.8,778.3M464.7,368.3L899.3,782.0M461.2,372.0L895.7,785.8M457.6,375.8L892.1,789.6M454.0,379.6L888.5,793.3M450.4,383.3L884.9,797.1M446.8,387.1L881.3,800.9M443.2,390.8L877.8,804.6M439.7,394.6L874.2,808.4M436.1,398.4L870.6,812.1M432.5,402.1L867.0,815.9M428.9,405.9L863.4,819.7M425.3,409.7L859.8,823.4M421.7,413.4L856.3,827.2M418.2,417.2L852.7,831.0M414.6,420.9L849.1,834.7M411.0,424.7L845.5,838.5M407.4,428.5L841.9,842.2M403.8,432.2L838.3,846.0M400.2,436.0L834.8,849.8M396.7,439.8L831.2,853.5M393.1,443.5L827.6,857.3M389.5,447.3L824.0,861.1M385.9,451.1L820.4,864.8M382.3,454.8L816.8,868.6M378.7,458.6L813.3,872.4M375.2,462.3L809.7,876.1M371.6,466.1L806.1,879.9M368.0,469.9L802.5,883.6M364.4,473.6L798.9,887.4M360.8,477.4L795.3,891.2M357.2,481.2L791.8,894.9M353.7,484.9L788.2,898.7M350.1,488.7L784.6,902.5M346.5,492.4L781.0,906.2M342.9,496.2L777.4,910.0M339.3,500.0L773.8,913.7M335.7,503.7L770.2,917.5M332.2,507.5L766.7,921.3M328.6,511.3L763.1,925.0M325.0,515.0L759.5,928.8M321.4,518.8L755.9,932.6M317.8,522.5L752.3,936.3M314.2,526.3L748.7,940.1M310.7,530.1L745.2,943.8M307.1,533.8L741.6,947.6M303.5,537.6L738.0,951.4M299.9,541.4L734.4,955.1M1088.5,309.3L947.4,892.5M1083.4,308.1L942.3,891.2M1078.4,306.8L937.3,890.0M1073.3,305.6L932.2,888.8M1068.3,304.4L927.2,887.6M1063.2,303.2L922.1,886.3M1058.2,301.9L917.1,885.1M1053.1,300.7L912.0,883.9M1048.1,299.5L907.0,882.7M1043.0,298.3L901.9,881.5M1038.0,297.1L896.9,880.2M1032.9,295.8L891.8,879.0M1027.9,294.6L886.8,877.8M1022.8,293.4L881.7,876.6M1017.8,292.2L876.7,875.3M1012.7,291.0L871.6,874.1M1007.7,289.7L866.6,872.9M1002.6,288.5L861.5,871.7M997.6,287.3L856.5,870.5M992.5,286.1L851.4,869.2M987.5,284.8L846.4,868.0M982.4,283.6L841.3,866.8M977.4,282.4L836.3,865.6M972.3,281.2L831.2,864.4M967.3,280.0L826.2,863.1M962.2,278.7L821.1,861.9M957.2,277.5L816.1,860.7M952.1,276.3L811.0,859.5M947.1,275.1L806.0,858.2M942.0,273.8L800.9,857.0M937.0,272.6L795.9,855.8M931.9,271.4L790.8,854.6M926.9,270.2L785.8,853.4M921.8,269.0L780.7,852.1M916.8,267.7L775.7,850.9M911.7,266.5L770.6,849.7M906.7,265.3L765.6,848.5M901.6,264.1L760.5,847.2M896.6,262.8L755.5,846.0M891.5,261.6L750.4,844.8M886.5,260.4L745.4,843.6M881.4,259.2L740.3,842.4M876.3,258.0L735.3,841.1M871.3,256.7L730.2,839.9M866.2,255.5L725.2,838.7M861.2,254.3L720.1,837.5M856.1,253.1L715.1,836.3M851.1,251.9L710.0,835.0M846.0,250.6L705.0,833.8M841.0,249.4L699.9,832.6M835.9,248.2L694.9,831.4M830.9,247.0L689.8,830.1M825.8,245.7L684.8,828.9M820.8,244.5L679.7,827.7M815.7,243.3L674.7,826.5M810.7,242.1L669.6,825.3M805.6,240.9L664.6,824.0M800.6,239.6L659.5,822.8M795.5,238.4L654.5,821.6M790.5,237.2L649.4,820.4M785.4,236.0L644.4,819.1M780.4,234.7L639.3,817.9M775.3,233.5L634.3,816.7M770.3,232.3L629.2,815.5M765.2,231.1L624.2,814.3M760.2,229.9L619.1,813.0M755.1,228.6L614.1,811.8M750.1,227.4L609.0,810.6M745.0,226.2L604.0,809.4M740.0,225.0L598.9,808.1M734.9,223.7L593.9,806.9M729.9,222.5L588.8,805.7M724.8,221.3L583.8,804.5M719.8,220.1L578.7,803.3M714.7,218.9L573.7,802.0M709.7,217.6L568.6,800.8M704.6,216.4L563.5,799.6M699.6,215.2L558.5,798.4M694.5,214.0L553.4,797.2M689.5,212.8L548.4,795.9M684.4,211.5L543.3,794.7M679.4,210.3L538.3,793.5M674.3,209.1L533.2,792.3M669.3,207.9L528.2,791.0M664.2,206.6L523.1,789.8M659.2,205.4L518.1,788.6M654.1,204.2L513.0,787.4M649.1,203.0L508.0,786.2M644.0,201.8L502.9,784.9M639.0,200.5L497.9,783.7M633.9,199.3L492.8,782.5M628.9,198.1L487.8,781.3M623.8,196.9L482.7,780.0M618.8,195.6L477.7,778.8M613.7,194.4L472.6,777.6M608.7,193.2L467.6,776.4M603.6,192.0L462.5,775.2M598.6,190.8L457.5,773.9M593.5,189.5L452.4,772.7M588.5,188.3L447.4,771.5M583.4,187.1L442.3,770.3M578.4,185.9L437.3,769.0M573.3,184.7L432.2,767.8M568.3,183.4L427.2,766.6M563.2,182.2L422.1,765.4M558.2,181.0L417.1,764.2M553.1,179.8L412.0,762.9M548.1,178.5L407.0,761.7M543.0,177.3L401.9,760.5M538.0,176.1L396.9,759.3M532.9,174.9L391.8,758.1M527.9,173.7L386.8,756.8M522.8,172.4L381.7,755.6M517.8,171.2L376.7,754.4M512.7,170.0L371.6,753.2M507.7,168.8L366.6,751.9M502.6,167.5L361.5,750.7" stroke="#000" stroke-width="1" fill="none"/><rect x="880" y="620" width="60" height="120" fill="url(#gS)" clip-path="url(#cS)"/><path clip-path="url(#cS)" d="M959.4,593.1L996.8,728.0M956.1,594.0L993.5,728.9M952.7,595.0L990.1,729.9M949.4,595.9L986.8,730.8M946.0,596.8L983.5,731.7M942.7,597.7L980.1,732.6M939.4,598.7L976.8,733.6M936.0,599.6L973.4,734.5M932.7,600.5L970.1,735.4M929.4,601.4L966.8,736.3M926.0,602.4L963.4,737.3M922.7,603.3L960.1,738.2M919.3,604.2L956.7,739.1M916.0,605.1L953.4,740.0M912.7,606.1L950.1,741.0M909.3,607.0L946.7,741.9M906.0,607.9L943.4,742.8M902.6,608.8L940.1,743.8M899.3,609.8L936.7,744.7M896.0,610.7L933.4,745.6M892.6,611.6L930.0,746.5M889.3,612.5L926.7,747.5M886.0,613.5L923.4,748.4M882.6,614.4L920.0,749.3M879.3,615.3L916.7,750.2M875.9,616.2L913.4,751.2M872.6,617.2L910.0,752.1M869.3,618.1L906.7,753.0M865.9,619.0L903.3,753.9M862.6,620.0L900.0,754.9M859.3,620.9L896.7,755.8M855.9,621.8L893.3,756.7M852.6,622.7L890.0,757.6M849.2,623.7L886.6,758.6M845.9,624.6L883.3,759.5M842.6,625.5L880.0,760.4M839.2,626.4L876.6,761.3M835.9,627.4L873.3,762.3M832.5,628.3L870.0,763.2M829.2,629.2L866.6,764.1M825.9,630.1L863.3,765.0M822.5,631.1L859.9,766.0M819.2,632.0L856.6,766.9M1008.9,681.1L910.8,780.9M1006.5,678.6L908.4,778.5M1004.0,676.2L905.9,776.1M1001.5,673.8L903.4,773.6M999.1,671.3L900.9,771.2M996.6,668.9L898.5,768.8M994.1,666.5L896.0,766.3M991.7,664.1L893.5,763.9M989.2,661.6L891.1,761.5M986.7,659.2L888.6,759.1M984.2,656.8L886.1,756.6M981.8,654.4L883.6,754.2M979.3,651.9L881.2,751.8M976.8,649.5L878.7,749.4M974.4,647.1L876.2,746.9M971.9,644.6L873.8,744.5M969.4,642.2L871.3,742.1M966.9,639.8L868.8,739.6M964.5,637.4L866.3,737.2M962.0,634.9L863.9,734.8M959.5,632.5L861.4,732.4M957.1,630.1L858.9,729.9M954.6,627.6L856.5,727.5M952.1,625.2L854.0,725.1M949.7,622.8L851.5,722.6M947.2,620.4L849.1,720.2M944.7,617.9L846.6,717.8M942.2,615.5L844.1,715.4M939.8,613.1L841.6,712.9M937.3,610.6L839.2,710.5M934.8,608.2L836.7,708.1M932.4,605.8L834.2,705.6M929.9,603.4L831.8,703.2M927.4,600.9L829.3,700.8M924.9,598.5L826.8,698.4M922.5,596.1L824.3,695.9M920.0,593.7L821.9,693.5M917.5,591.2L819.4,691.1M915.1,588.8L816.9,688.7M912.6,586.4L814.5,686.2M910.1,583.9L812.0,683.8M907.6,581.5L809.5,681.4M905.2,579.1L807.1,678.9M957.6,768.0L822.0,732.9M958.4,764.6L822.9,729.5M959.3,761.2L823.8,726.2M960.2,757.9L824.6,722.8M961.0,754.5L825.5,719.5M961.9,751.2L826.4,716.1M962.8,747.8L827.2,712.8M963.6,744.5L828.1,709.4M964.5,741.1L829.0,706.1M965.4,737.8L829.8,702.7M966.2,734.4L830.7,699.4M967.1,731.1L831.6,696.0M968.0,727.7L832.4,692.7M968.8,724.4L833.3,689.3M969.7,721.0L834.2,685.9M970.6,717.6L835.0,682.6M971.4,714.3L835.9,679.2M972.3,710.9L836.8,675.9M973.2,707.6L837.6,672.5M974.0,704.2L838.5,669.2M974.9,700.9L839.4,665.8M975.8,697.5L840.2,662.5M976.6,694.2L841.1,659.1M977.5,690.8L842.0,655.8M978.4,687.5L842.8,652.4M979.2,684.1L843.7,649.1M980.1,680.8L844.6,645.7M981.0,677.4L845.4,642.4M981.8,674.1L846.3,639.0M982.7,670.7L847.2,635.6M983.6,667.3L848.0,632.3M984.4,664.0L848.9,628.9M985.3,660.6L849.8,625.6M986.2,657.3L850.6,622.2M987.0,653.9L851.5,618.9M987.9,650.6L852.4,615.5M988.8,647.2L853.2,612.2M989.6,643.9L854.1,608.8M990.5,640.5L855.0,605.5M991.4,637.2L855.8,602.1M992.2,633.8L856.7,598.8M993.1,630.5L857.6,595.4M994.0,627.1L858.4,592.0" stroke="#000" stroke-width="1" fill="none"/></g><g clip-path="url(#pc)"><path d="M746,281 L792.7,440 C793.9,445.0 798.0,462.2 800.0,470.0 C802.0,477.8 803.4,481.1 805.0,486.7 C806.6,492.2 808.6,497.8 809.7,503.3 C810.8,508.9 811.3,514.4 811.7,520.0 C812.1,525.6 812.3,531.2 812.0,536.7 C811.7,542.2 811.2,547.8 810.0,553.3 C808.8,558.8 807.2,564.4 805.0,570.0 C802.8,575.6 799.9,581.3 796.7,586.7 C793.5,592.1 789.8,597.5 786.0,602.3 C782.2,607.1 777.8,612.0 773.8,615.7 C769.8,619.5 765.8,622.1 761.7,624.8 C757.7,627.5 753.6,630.1 749.5,632.1 C745.4,634.1 739.3,636.2 737.3,637.0" fill="none" stroke="#000" stroke-opacity="0.35" stroke-width="10"/><path d="M746,281 L792.7,440 C793.9,445.0 798.0,462.2 800.0,470.0 C802.0,477.8 803.4,481.1 805.0,486.7 C806.6,492.2 808.6,497.8 809.7,503.3 C810.8,508.9 811.3,514.4 811.7,520.0 C812.1,525.6 812.3,531.2 812.0,536.7 C811.7,542.2 811.2,547.8 810.0,553.3 C808.8,558.8 807.2,564.4 805.0,570.0 C802.8,575.6 799.9,581.3 796.7,586.7 C793.5,592.1 789.8,597.5 786.0,602.3 C782.2,607.1 777.8,612.0 773.8,615.7 C769.8,619.5 765.8,622.1 761.7,624.8 C757.7,627.5 753.6,630.1 749.5,632.1 C745.4,634.1 739.3,636.2 737.3,637.0" fill="none" stroke="#000" stroke-opacity="0.6" stroke-width="5"/><path d="M737.3,637 L517.3,702.3" fill="none" stroke="#000" stroke-opacity="0.3" stroke-width="8"/><path d="M854,249 L891.7,380 C893.2,384.8 897.5,399.2 900.4,408.8 C903.3,418.4 906.1,428.1 909.0,437.7 C911.9,447.3 915.3,456.9 917.7,466.5 C920.1,476.1 922.1,485.8 923.5,495.4 C924.9,505.0 925.4,514.6 925.8,524.2 C926.2,533.8 926.6,543.4 925.8,553.0 C925.0,562.6 923.2,572.3 921.1,581.9 C919.0,591.5 916.0,603.7 913.4,610.7 C910.8,617.7 906.7,621.7 905.4,623.9" fill="none" stroke="#000" stroke-opacity="0.3" stroke-width="8"/><path d="M884.1,663 C881.8,665.8 875.3,674.5 870.3,680.0 C865.3,685.5 859.5,691.5 854.1,696.2 C848.7,700.9 844.7,703.5 837.9,708.4 C831.1,713.3 821.6,720.5 813.5,725.4 C805.4,730.3 797.3,734.2 789.2,737.6 C781.1,741.0 774.4,742.7 764.9,745.7 C755.4,748.7 737.8,753.8 732.4,755.4 L546.8,809.8" fill="none" stroke="#000" stroke-opacity="0.3" stroke-width="8"/><path d="M737.3,637 L517.3,702.3" fill="none" stroke="#000" stroke-opacity="0.5" stroke-width="4"/><path d="M854,249 L891.7,380 C893.2,384.8 897.5,399.2 900.4,408.8 C903.3,418.4 906.1,428.1 909.0,437.7 C911.9,447.3 915.3,456.9 917.7,466.5 C920.1,476.1 922.1,485.8 923.5,495.4 C924.9,505.0 925.4,514.6 925.8,524.2 C926.2,533.8 926.6,543.4 925.8,553.0 C925.0,562.6 923.2,572.3 921.1,581.9 C919.0,591.5 916.0,603.7 913.4,610.7 C910.8,617.7 906.7,621.7 905.4,623.9" fill="none" stroke="#000" stroke-opacity="0.5" stroke-width="4"/><path d="M884.1,663 C881.8,665.8 875.3,674.5 870.3,680.0 C865.3,685.5 859.5,691.5 854.1,696.2 C848.7,700.9 844.7,703.5 837.9,708.4 C831.1,713.3 821.6,720.5 813.5,725.4 C805.4,730.3 797.3,734.2 789.2,737.6 C781.1,741.0 774.4,742.7 764.9,745.7 C755.4,748.7 737.8,753.8 732.4,755.4 L546.8,809.8" fill="none" stroke="#000" stroke-opacity="0.5" stroke-width="4"/><path d="M905.4,623.9 L932.6,727 L905.4,734.8 L884.9,661.8" fill="none" stroke="#000" stroke-opacity="0.35" stroke-width="5"/><path d="M517.3,702.3 L546.8,809.8 L549,809 Q548,752 523,702 Z" fill="#000"/><path d="M746,281 L854,249" stroke="#000" stroke-width="2"/></g><path d="M746,281 L854,249 L891.7,380 C893.2,384.8 897.5,399.2 900.4,408.8 C903.3,418.4 906.1,428.1 909.0,437.7 C911.9,447.3 915.3,456.9 917.7,466.5 C920.1,476.1 922.1,485.8 923.5,495.4 C924.9,505.0 925.4,514.6 925.8,524.2 C926.2,533.8 926.6,543.4 925.8,553.0 C925.0,562.6 923.2,572.3 921.1,581.9 C919.0,591.5 916.0,603.7 913.4,610.7 C910.8,617.7 906.7,621.7 905.4,623.9 L932.6,727 L905.4,734.8 L884.1,663 C881.8,665.8 875.3,674.5 870.3,680.0 C865.3,685.5 859.5,691.5 854.1,696.2 C848.7,700.9 844.7,703.5 837.9,708.4 C831.1,713.3 821.6,720.5 813.5,725.4 C805.4,730.3 797.3,734.2 789.2,737.6 C781.1,741.0 774.4,742.7 764.9,745.7 C755.4,748.7 737.8,753.8 732.4,755.4 L546.8,809.8 L517.3,702.3 L737.3,637 C739.3,636.2 745.4,634.1 749.5,632.1 C753.6,630.1 757.7,627.5 761.7,624.8 C765.8,622.1 769.8,619.5 773.8,615.7 C777.8,612.0 782.2,607.1 786.0,602.3 C789.8,597.5 793.5,592.1 796.7,586.7 C799.9,581.3 802.8,575.6 805.0,570.0 C807.2,564.4 808.8,558.8 810.0,553.3 C811.2,547.8 811.7,542.2 812.0,536.7 C812.3,531.2 812.1,525.6 811.7,520.0 C811.3,514.4 810.8,508.9 809.7,503.3 C808.6,497.8 806.6,492.2 805.0,486.7 C803.4,481.1 802.0,477.8 800.0,470.0 C798.0,462.2 793.9,445.0 792.7,440.0 Z" fill="none" stroke="#000" stroke-width="1"/><path d="M785,653h12M791,647v12" stroke="#7A9AE0" stroke-width="1"/></svg>
<div class="r" style="left:539px;top:824px;width:340px;height:13px;background:#fff;border:1px solid #000;box-sizing:border-box;"></div>
<div class="r" style="left:539px;top:824px;width:85px;height:13px;background:#000;"></div>
<div class="r" style="left:708px;top:824px;width:86px;height:13px;background:#000;"></div>
<div class="t" style="left:523px;top:808.8px;font-size:12px;line-height:14px;letter-spacing:-0.05px;">0.000</div>
<div class="t" style="left:692px;top:808.8px;font-size:12px;line-height:14px;letter-spacing:-0.05px;">0.150</div>
<div class="t" style="left:863px;top:808.8px;font-size:12px;line-height:14px;letter-spacing:-0.05px;">0.300 (m)</div>
<div class="t" style="left:607px;top:841.8px;font-size:12px;line-height:14px;letter-spacing:-0.05px;">0.075</div>
<div class="t" style="left:778px;top:841.8px;font-size:12px;line-height:14px;letter-spacing:-0.05px;">0.225</div>
<svg class="r" style="left:0px;top:0px;" width="1233" height="901" viewBox="0 0 1233 901"><path d="M1113.5,262.5 L1122,262.5 L1132.7,235.2 L1124.5,235.2 Z" fill="#fff"/><path d="M1133.6,235.6 L1144.7,262.5 L1136.7,262.5 L1129.6,245.2 Z" fill="#fff"/></svg>
<div class="t" style="left:1145.5px;top:242.9px;font-size:37px;line-height:14px;font-weight:700;color:#fff;letter-spacing:-1.3px;">nsys</div>
<div class="t" style="left:1156px;top:273.0px;font-size:18.4px;line-height:14px;font-weight:700;color:#fff;letter-spacing:-0.2px;">2024 R1</div>
<svg class="r" style="left:0px;top:0px;" width="1233" height="901" viewBox="0 0 1233 901"><path d="M1121.9,720.2 L1126.5,725.3 L1131.2,720.2 M1126.5,725.3 V730.2" stroke="#10A010" stroke-width="1.1" fill="none"/><path d="M1208.9,769.3 L1217.1,778.7 M1217.1,769.3 L1208.9,778.7" stroke="#F01010" stroke-width="1.1" fill="none"/><path d="M1148,799 L1128,744" stroke="#108010" stroke-width="3.5"/><path d="M1125.5,740 L1135,752 L1123,755.5 Z" fill="#108010"/><path d="M1148,798 L1190,785" stroke="#C01010" stroke-width="3.5"/><path d="M1200,782.5 L1187,779 L1189.5,791.5 Z" fill="#D01010"/><circle cx="1148" cy="799.5" r="6" fill="#000090"/><circle cx="1165" cy="764" r="6" fill="#10C8D0"/><circle cx="1163.5" cy="762.5" r="2.5" fill="#50E8F0"/><path d="M1152.5,789.8 H1158 L1152.5,798.5 H1158" stroke="#2020F0" stroke-width="1" fill="none"/></svg>
</div></body></html>
